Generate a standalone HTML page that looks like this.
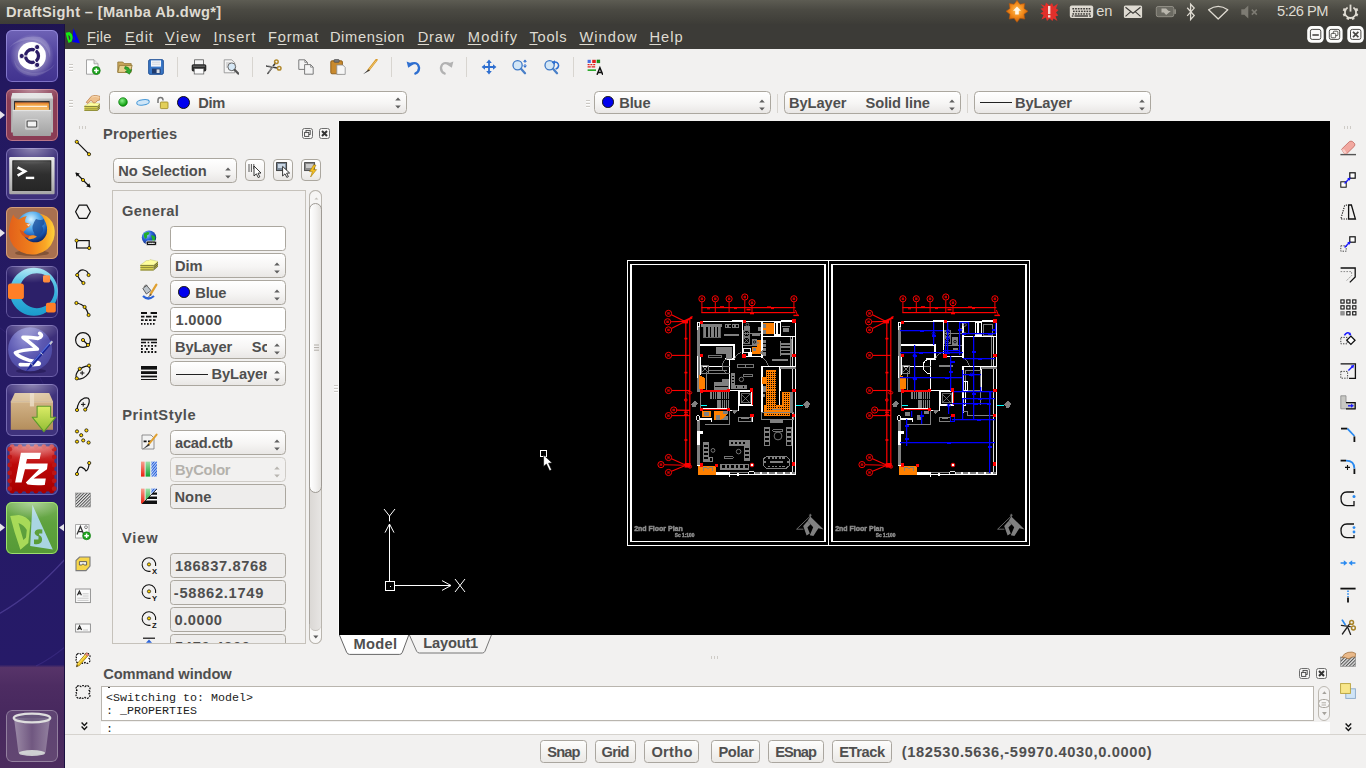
<!DOCTYPE html>
<html>
<head>
<meta charset="utf-8">
<title>DraftSight</title>
<style>
*{box-sizing:border-box;margin:0;padding:0}
html,body{width:1366px;height:768px;overflow:hidden;background:#f2f1f0;font-family:"Liberation Sans",sans-serif;}
.abs{position:absolute}
svg{display:block}
#root{position:absolute;left:0;top:0;width:1366px;height:768px;overflow:hidden;background:#f2f1f0}
#panel{position:absolute;left:0;top:0;width:1366px;height:24px;background:linear-gradient(#5d5c53 0%,#4b4a43 40%,#3d3c37 100%);}
#menubar{position:absolute;left:65px;top:24px;width:1301px;height:25px;background:#3c3b37}
#menubar u{text-decoration:underline;text-underline-offset:1.5px;text-decoration-thickness:1px}
#launcher{position:absolute;left:0;top:24px;width:65px;height:744px;background:linear-gradient(#1e1452 0%,#231860 8%,#251a63 40%,#261a68 86.1%,#573469 86.5%,#4d2c62 89%,#47285e 93%,#4c2c5e 100%);overflow:hidden;border-right:1px solid #1a1040}
.tile{position:absolute;left:6px;width:52px;height:52px;border-radius:6px;overflow:hidden}
.t{position:absolute;white-space:nowrap}
.combo{position:absolute;border:1px solid #aba79f;border-radius:4.5px;background:linear-gradient(#ffffff 0%,#f6f5f4 55%,#e9e7e5 100%);height:23px}
.field{position:absolute;border:1px solid #aba79f;border-radius:3.5px;background:#fff;height:24px}
.field.ro{background:#eeedec}
.sep{position:absolute;width:1px;background:#d8d5d0;top:57px;height:20px}
.hdl{position:absolute;width:4px;height:8px;background:repeating-linear-gradient(#cbc8c3 0 1px,#fdfdfd 1px 2px,transparent 2px 3px)}
#canvas{position:absolute;left:339px;top:121px;width:991px;height:514px;background:#000;overflow:hidden}
.btn{position:absolute;border:1px solid #aaa69f;border-radius:3.5px;background:linear-gradient(#fdfdfc,#ebe9e6);height:23px;top:740px}
</style>
</head>
<body>
<div id="root">
<div id="panel"><div class="t" style="left:5.90px;top:2.00px;font-size:14.67px;line-height:20px;color:#dfdbd2;font-weight:bold;letter-spacing:0.365px;">DraftSight – [Manba Ab.dwg*]</div><div class="t" style="left:1096.20px;top:1.00px;font-size:14.67px;line-height:20px;color:#dfdbd2;letter-spacing:-0.118px;">en</div><div class="t" style="left:1277.00px;top:1.00px;font-size:14.67px;line-height:20px;color:#dfdbd2;letter-spacing:-0.522px;">5:26 PM</div><svg class="abs" style="left:0px;top:0px;" width="1366" height="24" viewBox="0 0 1366 24"><defs><radialGradient id="og" cx="50%" cy="45%" r="55%"><stop offset="0" stop-color="#ffc35a"/><stop offset="0.55" stop-color="#f38a1a"/><stop offset="1" stop-color="#c9620a"/></radialGradient></defs><polygon points="1017.00,0.30 1019.91,4.28 1024.78,3.52 1024.02,8.39 1028.00,11.30 1024.02,14.21 1024.78,19.08 1019.91,18.32 1017.00,22.30 1014.09,18.32 1009.22,19.08 1009.98,14.21 1006.00,11.30 1009.98,8.39 1009.22,3.52 1014.09,4.28" fill="url(#og)" stroke="#b6560a" stroke-width="0.6"/><path d="M1017 6.5 l4 4.2 h-2.2 v3.8 h-3.6 v-3.8 h-2.2z" fill="#fff6e6"/><polygon points="1040.5,4 1045,6 1046,2.5 1049.5,5.5 1052,3 1053.5,6.5 1058,3.5 1056,8.5 1058.5,10 1056,12.5 1058.3,15.5 1055.5,16.5 1057.5,21 1053.5,18.5 1052.5,21 1049.5,18.5 1047,21 1045.8,17.5 1041.5,19.5 1043.5,15 1040.3,13.5 1043.3,11.5 1040.5,8.5 1043.8,8z" fill="#e2302b"/><rect x="1048" y="6" width="2.4" height="8" fill="#f7d9d4"/><rect x="1048" y="15.2" width="2.4" height="2.3" fill="#f7d9d4"/><rect x="1069.8" y="5.5" width="23.4" height="12.5" rx="2" fill="#dfdbd2"/><rect x="1072.4" y="8.0" width="1.7" height="1.5" fill="#3c3b37"/><rect x="1075.1" y="8.0" width="1.7" height="1.5" fill="#3c3b37"/><rect x="1077.8" y="8.0" width="1.7" height="1.5" fill="#3c3b37"/><rect x="1080.5" y="8.0" width="1.7" height="1.5" fill="#3c3b37"/><rect x="1083.2" y="8.0" width="1.7" height="1.5" fill="#3c3b37"/><rect x="1085.9" y="8.0" width="1.7" height="1.5" fill="#3c3b37"/><rect x="1088.6" y="8.0" width="1.7" height="1.5" fill="#3c3b37"/><rect x="1073.0" y="10.6" width="1.7" height="1.5" fill="#3c3b37"/><rect x="1075.7" y="10.6" width="1.7" height="1.5" fill="#3c3b37"/><rect x="1078.4" y="10.6" width="1.7" height="1.5" fill="#3c3b37"/><rect x="1081.1" y="10.6" width="1.7" height="1.5" fill="#3c3b37"/><rect x="1083.8" y="10.6" width="1.7" height="1.5" fill="#3c3b37"/><rect x="1086.5" y="10.6" width="1.7" height="1.5" fill="#3c3b37"/><rect x="1089.2" y="10.6" width="1.7" height="1.5" fill="#3c3b37"/><rect x="1072.4" y="13.2" width="1.7" height="1.5" fill="#3c3b37"/><rect x="1075.1" y="13.2" width="1.7" height="1.5" fill="#3c3b37"/><rect x="1077.8" y="13.2" width="1.7" height="1.5" fill="#3c3b37"/><rect x="1080.5" y="13.2" width="1.7" height="1.5" fill="#3c3b37"/><rect x="1083.2" y="13.2" width="1.7" height="1.5" fill="#3c3b37"/><rect x="1085.9" y="13.2" width="1.7" height="1.5" fill="#3c3b37"/><rect x="1088.6" y="13.2" width="1.7" height="1.5" fill="#3c3b37"/><rect x="1074.5" y="15.3" width="13.5" height="1.4" fill="#3c3b37"/><rect x="1071.8" y="15.3" width="1.6" height="1.4" fill="#3c3b37"/><rect x="1089.2" y="15.3" width="1.8" height="1.4" fill="#3c3b37"/><rect x="1123.9" y="5.5" width="18.2" height="12.5" rx="1.5" fill="#dfdbd2"/><path d="M1125.5 7.3 L1133 13.3 L1140.5 7.3 M1125.5 16.3 L1130.8 11.6 M1140.5 16.3 L1135.2 11.6" stroke="#3c3b37" stroke-width="1.1" fill="none"/><rect x="1156.3" y="6.5" width="17.5" height="10.2" rx="1.8" fill="#6b6a62" stroke="#8f8d84" stroke-width="1"/><rect x="1174.2" y="9.3" width="1.8" height="4.6" fill="#8f8d84"/><path d="M1161.5 8.6 h4.6 l2.6 2.4 h2.2 l-4.8 4.1 -2.2 -2.6 h-2.4z" fill="#b9b6ad"/><path d="M1187.2 7.8 L1194.2 15.6 L1190.6 19.5 V4.2 L1194.2 8.1 L1187.2 15.9" stroke="#dfdbd2" stroke-width="1.3" fill="none" stroke-linejoin="miter"/><path d="M1208.6 9.8 Q1218.2 2.8 1227.8 9.8 L1218.2 19 Z" stroke="#dfdbd2" stroke-width="1.3" fill="none" stroke-linejoin="round"/><path d="M1241.3 9.3 h3 l4 -3.8 v13 l-4 -3.8 h-3z" fill="#7d7b73"/><path d="M1251.8 9.6 l5 5 M1256.8 9.6 l-5 5" stroke="#7d7b73" stroke-width="1.5"/><line x1="1355.30" y1="10.31" x2="1357.80" y2="9.28" stroke="#dfdbd2" stroke-width="2.6"/><line x1="1355.30" y1="14.29" x2="1357.80" y2="15.32" stroke="#dfdbd2" stroke-width="2.6"/><line x1="1352.49" y1="17.10" x2="1353.52" y2="19.60" stroke="#dfdbd2" stroke-width="2.6"/><line x1="1348.51" y1="17.10" x2="1347.48" y2="19.60" stroke="#dfdbd2" stroke-width="2.6"/><line x1="1345.70" y1="14.29" x2="1343.20" y2="15.32" stroke="#dfdbd2" stroke-width="2.6"/><line x1="1345.70" y1="10.31" x2="1343.20" y2="9.28" stroke="#dfdbd2" stroke-width="2.6"/><path d="M1347.6 7.6 A5.6 5.6 0 1 0 1353.4 7.6" stroke="#dfdbd2" stroke-width="1.8" fill="none"/><line x1="1350.5" y1="4.6" x2="1350.5" y2="11.6" stroke="#dfdbd2" stroke-width="1.8"/></svg></div>
<div id="menubar"><div class="t" style="left:21.90px;top:3.00px;font-size:14.67px;line-height:20px;color:#dfdbd2;letter-spacing:0.287px;"><u>F</u>ile</div><div class="t" style="left:59.90px;top:3.00px;font-size:14.67px;line-height:20px;color:#dfdbd2;letter-spacing:0.907px;"><u>E</u>dit</div><div class="t" style="left:100.10px;top:3.00px;font-size:14.67px;line-height:20px;color:#dfdbd2;letter-spacing:1.256px;"><u>V</u>iew</div><div class="t" style="left:148.40px;top:3.00px;font-size:14.67px;line-height:20px;color:#dfdbd2;letter-spacing:1.062px;"><u>I</u>nsert</div><div class="t" style="left:202.90px;top:3.00px;font-size:14.67px;line-height:20px;color:#dfdbd2;letter-spacing:0.808px;">F<u>o</u>rmat</div><div class="t" style="left:264.90px;top:3.00px;font-size:14.67px;line-height:20px;color:#dfdbd2;letter-spacing:0.650px;">Dimen<u>s</u>ion</div><div class="t" style="left:352.70px;top:3.00px;font-size:14.67px;line-height:20px;color:#dfdbd2;letter-spacing:0.822px;"><u>D</u>raw</div><div class="t" style="left:402.70px;top:3.00px;font-size:14.67px;line-height:20px;color:#dfdbd2;letter-spacing:1.238px;"><u>M</u>odify</div><div class="t" style="left:464.40px;top:3.00px;font-size:14.67px;line-height:20px;color:#dfdbd2;letter-spacing:0.763px;"><u>T</u>ools</div><div class="t" style="left:514.40px;top:3.00px;font-size:14.67px;line-height:20px;color:#dfdbd2;letter-spacing:1.025px;"><u>W</u>indow</div><div class="t" style="left:584.40px;top:3.00px;font-size:14.67px;line-height:20px;color:#dfdbd2;letter-spacing:1.043px;"><u>H</u>elp</div><svg class="abs" style="left:0px;top:0px;" width="17" height="25" viewBox="0 0 17 25"><path d="M8.4 4.2 L15 19.3 L7.3 18z M9.2 12.6 q-1.2 0.4 -0.6 1.4 q1 0.6 0.4 1.6 q-0.6 0.6 -1.2 0.2 l0 0.6 q1.4 0.6 2 -0.6 q0.4 -1.2 -0.6 -1.8 q-0.2 -0.6 0.4 -0.8z" fill="#0000f2" fill-rule="evenodd"/><path d="M0.7 8.7 L4.4 7.9 Q8 9.8 7.6 14.6 L6.6 17.6 L3.6 18.9 Q1.4 13.4 0.7 8.7z M3.3 10.8 Q3.4 13.6 4.5 16.2 L5.4 15 Q5.8 12.2 3.3 10.8z" fill="#12ee12" fill-rule="evenodd"/></svg><svg class="abs" style="left:0px;top:0px;" width="1301" height="25" viewBox="0 0 1301 25"><rect x="1242.2" y="2.1" width="16.5" height="16.7" rx="4.6" fill="#fdfdfc"/><rect x="1245.4" y="5.4" width="10.4" height="10" rx="1.8" fill="#fbfaf9" stroke="#4a4946" stroke-width="1"/><rect x="1247.4" y="10.2" width="6.4" height="1.6" fill="#4a4946"/><rect x="1261.1" y="2.1" width="16.5" height="16.7" rx="4.6" fill="#fdfdfc"/><rect x="1264.3" y="5.4" width="10.4" height="10" rx="1.8" fill="#fbfaf9" stroke="#4a4946" stroke-width="1"/><rect x="1268.3" y="7.2" width="4.6" height="4.4" rx="0.9" fill="none" stroke="#4a4946" stroke-width="0.9"/><rect x="1266.1" y="9.4" width="4.6" height="4.4" rx="0.9" fill="#fbfaf9" stroke="#4a4946" stroke-width="0.9"/><rect x="1282.3" y="2.1" width="16.5" height="16.7" rx="4.6" fill="#fdfdfc"/><rect x="1285.5" y="5.4" width="10.4" height="10" rx="1.8" fill="#fbfaf9" stroke="#4a4946" stroke-width="1"/><path d="M1288.0 7.8 l5.4 5.4 M1293.4 7.8 l-5.4 5.4" stroke="#4a4946" stroke-width="1.7"/></svg></div>
<div id="launcher"><svg class="abs" style="left:0px;top:0px;" width="65" height="744" viewBox="0 0 65 744"><defs><radialGradient id="tg" cx="50%" cy="50%" r="50%"><stop offset="0" stop-color="#fff" stop-opacity="0.42"/><stop offset="1" stop-color="#fff" stop-opacity="0"/></radialGradient></defs><path d="M-5 592 Q32 572 66 534" stroke="rgba(120,100,200,0.4)" stroke-width="1.3" fill="none"/><path d="M36 642 Q52 634 66 622" stroke="rgba(90,70,170,0.3)" stroke-width="1.2" fill="none"/><path d="M-5 300 Q40 330 66 420" stroke="rgba(70,50,140,0.3)" stroke-width="1" fill="none"/></svg><div class="tile" style="top:6px;background:#4a3c9a;"><svg width="52" height="52" viewBox="0 0 52 52" style="position:absolute;left:0;top:0"><defs><linearGradient id="d1" x1="0" y1="0" x2="0" y2="1"><stop offset="0" stop-color="#6f63b6"/><stop offset="0.5" stop-color="#4f419c"/><stop offset="1" stop-color="#41338f"/></linearGradient><radialGradient id="d2" cx="50%" cy="50%" r="50%"><stop offset="0.55" stop-color="#fff" stop-opacity="0.38"/><stop offset="1" stop-color="#fff" stop-opacity="0"/></radialGradient></defs><rect width="52" height="52" fill="url(#d1)"/><path d="M3 18 Q14 4 34 7 Q46 12 44 28 Q40 8 20 10 Q9 12 3 18z" fill="rgba(255,255,255,0.16)"/><path d="M8 30 Q10 46 30 46 Q45 42 49 34 Q40 44 26 43 Q12 41 8 30z" fill="rgba(255,255,255,0.13)"/><circle cx="26" cy="26" r="22" fill="url(#d2)"/><circle cx="25.9" cy="25.9" r="14" fill="#ffffff"/><circle cx="26" cy="26" r="6.5" fill="none" stroke="#2b1c66" stroke-width="3.3"/><line x1="28.00" y1="22.54" x2="30.50" y2="18.21" stroke="#fff" stroke-width="1.2"/><circle cx="31.15" cy="17.08" r="2.6" fill="#2b1c66" stroke="#fff" stroke-width="0.9"/><line x1="22.00" y1="26.00" x2="17.00" y2="26.00" stroke="#fff" stroke-width="1.2"/><circle cx="15.70" cy="26.00" r="2.6" fill="#2b1c66" stroke="#fff" stroke-width="0.9"/><line x1="28.00" y1="29.46" x2="30.50" y2="33.79" stroke="#fff" stroke-width="1.2"/><circle cx="31.15" cy="34.92" r="2.6" fill="#2b1c66" stroke="#fff" stroke-width="0.9"/><rect x="0.5" y="0.5" width="51" height="51" rx="5.5" fill="none" stroke="rgba(190,180,255,0.5)" stroke-width="1"/></svg></div><div class="tile" style="top:65px;background:#8a3c54;"><svg width="52" height="52" viewBox="0 0 52 52" style="position:absolute;left:0;top:0"><defs><linearGradient id="f1" x1="0" y1="0" x2="0" y2="1"><stop offset="0" stop-color="#cdcdcd"/><stop offset="1" stop-color="#a2a2a2"/></linearGradient></defs><rect width="52" height="52" fill="#8a3c54"/><path d="M6.4 4 H45.6 L47 9.2 V43.6 H5.1 V9.2z" fill="#b4b4b4"/><path d="M6.4 4 H45.6 L47 9.4 H5.1z" fill="#dedede"/><rect x="8.1" y="11.9" width="35.5" height="9" fill="#262626"/><rect x="9" y="13.4" width="33.8" height="7.4" fill="#e2762a"/><rect x="9" y="14.6" width="33.8" height="6.2" fill="#f0a040"/><rect x="10.6" y="16.7" width="30.6" height="1.5" fill="#fdf0dc"/><rect x="9" y="18.6" width="33.8" height="2.2" fill="#f4b860"/><rect x="6.8" y="20.9" width="38.3" height="26" rx="0.8" fill="url(#f1)"/><rect x="6.8" y="20.9" width="38.3" height="1.2" fill="#e4e4e4"/><rect x="19" y="30" width="13.6" height="10.8" rx="1.6" fill="#d2d2d2"/><rect x="21.1" y="32" width="9.6" height="6" rx="0.8" fill="#f2f2f2" stroke="#4c4c4c" stroke-width="1.1"/><ellipse cx="26" cy="0" rx="30" ry="17" fill="url(#tg)"/><rect x="0.5" y="0.5" width="51" height="51" rx="5.5" fill="none" stroke="rgba(255,200,215,0.42)" stroke-width="1"/></svg></div><div class="tile" style="top:124px;background:#3e317b;"><svg width="52" height="52" viewBox="0 0 52 52" style="position:absolute;left:0;top:0"><defs><linearGradient id="t3" x1="0" y1="0" x2="0" y2="1"><stop offset="0" stop-color="#ececec"/><stop offset="1" stop-color="#a6a6a6"/></linearGradient><linearGradient id="t4" x1="0" y1="0" x2="0" y2="1"><stop offset="0" stop-color="#4e4e4e"/><stop offset="0.45" stop-color="#2f2f2f"/><stop offset="1" stop-color="#262626"/></linearGradient></defs><rect width="52" height="52" fill="#3e317b"/><rect x="3.2" y="9.1" width="45.4" height="37.1" rx="1.2" fill="url(#t3)"/><rect x="6.8" y="12.8" width="38.1" height="29.8" fill="url(#t4)" stroke="#111" stroke-width="0.8"/><path d="M11.6 19.4 L19 23.4 L11.6 27.6" stroke="#fff" stroke-width="2.7" fill="none"/><rect x="19.8" y="28.7" width="8.4" height="2.4" fill="#fff"/><ellipse cx="26" cy="0" rx="30" ry="17" fill="url(#tg)"/><rect x="0.5" y="0.5" width="51" height="51" rx="5.5" fill="none" stroke="rgba(200,190,255,0.4)" stroke-width="1"/></svg></div><div class="tile" style="top:183px;background:#a9704f;"><svg width="52" height="52" viewBox="0 0 52 52" style="position:absolute;left:0;top:0"><defs><radialGradient id="g4" cx="45%" cy="25%" r="75%"><stop offset="0" stop-color="#d6f2ff"/><stop offset="0.35" stop-color="#5ab0ee"/><stop offset="0.7" stop-color="#1c5fb8"/><stop offset="1" stop-color="#0a1f5e"/></radialGradient><linearGradient id="fx" x1="0" y1="0" x2="1" y2="0"><stop offset="0" stop-color="#e2601a"/><stop offset="0.5" stop-color="#f0801c"/><stop offset="0.8" stop-color="#f9a826"/><stop offset="1" stop-color="#ffd23c"/></linearGradient></defs><rect width="52" height="52" fill="#a9704f"/><ellipse cx="26" cy="46" rx="17" ry="3" fill="rgba(60,30,10,0.35)"/><circle cx="26.6" cy="20.4" r="16" fill="url(#g4)"/><path d="M30 12 q5 2 8 0 q2 5 -2 7 q3 4 -1 8 q-3 5 -8 6 q3 -6 0 -9 q-2 -5 3 -12z" fill="#174a98" opacity="0.75"/><path d="M7.2 7.6 Q9 11.6 12.6 12.4 Q16.4 10 20.8 9 Q18.4 12.8 19.4 15.4 Q22 16 24.6 17.4 Q24 19.8 20.8 21 Q19.6 23.6 17.6 24.4 Q17 28.4 20 31.4 Q24.6 35.8 31.6 35.2 Q38 34 40.6 27 Q42.4 19.6 38 12 Q36.6 8.6 33.2 6.4 Q42 8 46.4 15.4 Q50.4 23.4 47.6 32.6 Q43.6 44.6 30.6 47.2 Q16 49 7.4 39 Q0.8 30 3.6 18.6 Q4.8 12.6 7.2 7.6z" fill="url(#fx)"/><path d="M13.6 22.6 Q14.4 28.8 21 30.8 Q26.4 31.6 30.6 29 Q27 28 25 28.6 Q19.6 28.4 17.2 24.4z" fill="#d8541a"/><path d="M23 29.4 Q28 27 31 29.8 Q27 32.8 22 32z" fill="#f2902a"/><path d="M20.4 17.6 l4 -0.6 l-1.6 2.6z" fill="#fbe9d2"/><rect x="0.5" y="0.5" width="51" height="51" rx="5.5" fill="none" stroke="rgba(255,205,170,0.5)" stroke-width="1"/></svg></div><div class="tile" style="top:242px;background:#2c2069;"><svg width="52" height="52" viewBox="0 0 52 52" style="position:absolute;left:0;top:0"><defs><linearGradient id="c5" x1="0" y1="0" x2="0" y2="1"><stop offset="0" stop-color="#8adcf0"/><stop offset="0.5" stop-color="#3ab4de"/><stop offset="1" stop-color="#1a9acc"/></linearGradient></defs><rect width="52" height="52" fill="#2c2069"/><path d="M27.9 1.8 a24 24 0 1 0 0.01 0z M30.9 7.2 a17.5 17.5 0 1 1 -0.01 0z" fill="url(#c5)" fill-rule="evenodd"/><rect x="2" y="17.4" width="15.9" height="15.6" rx="2.6" fill="#ff7f27"/><rect x="37" y="9.2" width="7.1" height="7.2" rx="1.4" fill="#ff8a3a"/><rect x="40" y="36.8" width="9.8" height="9.8" rx="1.8" fill="#ff7f27"/><ellipse cx="26" cy="0" rx="30" ry="17" fill="url(#tg)"/><rect x="0.5" y="0.5" width="51" height="51" rx="5.5" fill="none" stroke="rgba(200,190,255,0.35)" stroke-width="1"/></svg></div><div class="tile" style="top:301px;background:#3c2f7a;"><svg width="52" height="52" viewBox="0 0 52 52" style="position:absolute;left:0;top:0"><defs><radialGradient id="e6" cx="38%" cy="28%" r="80%"><stop offset="0" stop-color="#8f8dd2"/><stop offset="0.5" stop-color="#5c59b2"/><stop offset="1" stop-color="#4a46a0"/></radialGradient></defs><rect width="52" height="52" fill="#3c2f7a"/><ellipse cx="25" cy="46" rx="15" ry="2.6" fill="rgba(20,10,60,0.4)"/><circle cx="24.1" cy="24.3" r="22" fill="url(#e6)"/><path d="M33.6 8.4 Q38 11 32 13.4 Q22 12 17 12.4 Q21 15 31.4 24 Q14 25 9.4 27.8 Q12 32 24 35.6 Q35 37.6 33 39.2 Q22 40 14.2 39.6" stroke="#fff" stroke-width="3.6" fill="none" stroke-linejoin="round" stroke-linecap="round"/><path d="M45.8 15.4 L47 17 L27.4 40.6 L20 46.4 L24.6 38.4z" fill="#1a2496"/><path d="M45.4 16.2 L25.4 39" stroke="#5a74e0" stroke-width="1.1"/><path d="M45.8 15.4 l1.2 1.6 l-2.4 3 l-1.4 -1.4z" fill="#c8c8d0"/><path d="M34.4 27.6 l2.4 2 M25 38.6 l2.2 2" stroke="#c8c8d0" stroke-width="1"/><ellipse cx="26" cy="0" rx="30" ry="17" fill="url(#tg)"/><rect x="0.5" y="0.5" width="51" height="51" rx="5.5" fill="none" stroke="rgba(200,190,255,0.35)" stroke-width="1"/></svg></div><div class="tile" style="top:360px;background:#3f327c;"><svg width="52" height="52" viewBox="0 0 52 52" style="position:absolute;left:0;top:0"><defs><linearGradient id="p7" x1="0" y1="0" x2="0" y2="1"><stop offset="0" stop-color="#d2b388"/><stop offset="1" stop-color="#b48e5c"/></linearGradient><linearGradient id="a7" x1="0" y1="0" x2="0" y2="1"><stop offset="0" stop-color="#dbec66"/><stop offset="1" stop-color="#93bd34"/></linearGradient></defs><rect width="52" height="52" fill="#3f327c"/><path d="M8.8 9.1 H43.2 L47 17.4 H4.8z" fill="#dcc39e"/><rect x="4.8" y="17.4" width="42.2" height="28.4" fill="url(#p7)"/><rect x="4.8" y="17.4" width="42.2" height="1" fill="#e6d2b0"/><rect x="23.9" y="9.1" width="4.2" height="13.3" fill="#eadcc4" opacity="0.85"/><path d="M31.1 22.2 H44.6 V33.2 H49.8 L37.9 47.7 L26.2 33.2 H31.1z" fill="url(#a7)" stroke="#5d9a2c" stroke-width="1.1" stroke-linejoin="round"/><ellipse cx="26" cy="0" rx="30" ry="17" fill="url(#tg)"/><rect x="0.5" y="0.5" width="51" height="51" rx="5.5" fill="none" stroke="rgba(200,190,255,0.4)" stroke-width="1"/></svg></div><div class="tile" style="top:419px;background:#3b3688;"><svg width="52" height="52" viewBox="0 0 52 52" style="position:absolute;left:0;top:0"><defs><linearGradient id="z8" x1="0" y1="0" x2="0" y2="1"><stop offset="0" stop-color="#dc5a5a"/><stop offset="0.4" stop-color="#be0808"/><stop offset="1" stop-color="#a80000"/></linearGradient></defs><rect width="52" height="52" fill="#3b3688"/><rect x="3.6" y="3.4" width="44.8" height="45" fill="url(#z8)"/><circle cx="6.2" cy="3.6" r="2.4" fill="#d04848"/><circle cx="6.2" cy="48.2" r="2.4" fill="#a80000"/><circle cx="3.8" cy="6.2" r="2.4" fill="#bc1616"/><circle cx="48.2" cy="6.2" r="2.4" fill="#bc1616"/><circle cx="14.1" cy="3.6" r="2.4" fill="#d04848"/><circle cx="14.1" cy="48.2" r="2.4" fill="#a80000"/><circle cx="3.8" cy="14.1" r="2.4" fill="#bc1616"/><circle cx="48.2" cy="14.1" r="2.4" fill="#bc1616"/><circle cx="22.0" cy="3.6" r="2.4" fill="#d04848"/><circle cx="22.0" cy="48.2" r="2.4" fill="#a80000"/><circle cx="3.8" cy="22.0" r="2.4" fill="#bc1616"/><circle cx="48.2" cy="22.0" r="2.4" fill="#bc1616"/><circle cx="29.9" cy="3.6" r="2.4" fill="#d04848"/><circle cx="29.9" cy="48.2" r="2.4" fill="#a80000"/><circle cx="3.8" cy="29.9" r="2.4" fill="#bc1616"/><circle cx="48.2" cy="29.9" r="2.4" fill="#bc1616"/><circle cx="37.8" cy="3.6" r="2.4" fill="#d04848"/><circle cx="37.8" cy="48.2" r="2.4" fill="#a80000"/><circle cx="3.8" cy="37.8" r="2.4" fill="#bc1616"/><circle cx="48.2" cy="37.8" r="2.4" fill="#bc1616"/><circle cx="45.7" cy="3.6" r="2.4" fill="#d04848"/><circle cx="45.7" cy="48.2" r="2.4" fill="#a80000"/><circle cx="3.8" cy="45.7" r="2.4" fill="#bc1616"/><circle cx="48.2" cy="45.7" r="2.4" fill="#bc1616"/><path d="M14.9 9.8 H34.9 L33.7 16 H21 L20 20.5 H41.7 L41 26.2 L27.6 35.6 H39.8 L38.8 42 Q28 42.6 21.6 41.4 L19.8 39.4 L33 26.2 H19 L15.6 39.6 H9.1z" fill="#fff"/><ellipse cx="26" cy="0" rx="30" ry="17" fill="url(#tg)"/><rect x="0.5" y="0.5" width="51" height="51" rx="5.5" fill="none" stroke="rgba(200,190,255,0.35)" stroke-width="1"/></svg></div><div class="tile" style="top:478px;background:#5aa030;"><svg width="52" height="52" viewBox="0 0 52 52" style="position:absolute;left:0;top:0"><defs><linearGradient id="g9" x1="0" y1="0" x2="0" y2="1"><stop offset="0" stop-color="#78b258"/><stop offset="0.4" stop-color="#5fa23e"/><stop offset="1" stop-color="#569a36"/></linearGradient></defs><rect width="52" height="52" fill="url(#g9)"/><path d="M4.2 14.1 L12.8 13 Q21 14.4 24.5 20.5 L22.3 40.9 L14.4 47.7 Q8 30 4.2 14.1z M12.5 20.9 Q15 30 17.4 37.9 L20 35.6 L20.8 28.1 Q18 23 12.5 20.9z" fill="#a8da58" fill-rule="evenodd"/><path d="M26.4 2.8 L46.8 47.4 L24.2 44z M36.3 27.6 Q30 26 28.6 30.4 Q28.6 33 32.6 34.4 L32.4 37.4 L28 37.6 L28 42 Q35 43 36 38.4 Q36.6 34.6 33 33 L33.2 31.4 L36.3 31.4z" fill="#a9d5e2" fill-rule="evenodd"/><ellipse cx="26" cy="0" rx="30" ry="17" fill="url(#tg)"/><rect x="0.5" y="0.5" width="51" height="51" rx="5.5" fill="none" stroke="rgba(170,235,120,0.85)" stroke-width="1"/></svg></div><div class="tile" style="top:686px;background:rgba(255,255,255,0.13);"><svg width="52" height="52" viewBox="0 0 52 52" style="position:absolute;left:0;top:0"><defs><linearGradient id="t1" x1="0" y1="0" x2="1" y2="0"><stop offset="0" stop-color="rgba(255,255,255,0.38)"/><stop offset="0.5" stop-color="rgba(255,255,255,0.10)"/><stop offset="1" stop-color="rgba(255,255,255,0.32)"/></linearGradient></defs><path d="M8 8 L12.4 42.4 Q26 47 39.6 42.4 L44 8z" fill="url(#t1)"/><ellipse cx="26" cy="43" rx="13.2" ry="3" fill="rgba(232,240,232,0.78)"/><ellipse cx="26" cy="8" rx="18.2" ry="4.4" fill="rgba(110,100,130,0.6)" stroke="#dedede" stroke-width="2.4"/><rect x="0.5" y="0.5" width="51" height="51" rx="5.5" fill="none" stroke="rgba(255,255,255,0.32)" stroke-width="1"/></svg></div><svg class="abs" style="left:0px;top:0px;" width="65" height="744" viewBox="0 0 65 744"><path d="M0 87.0 l5 4 l-5 4z" fill="#e6e4ea"/><path d="M0 205.0 l5 4 l-5 4z" fill="#e6e4ea"/><path d="M0 499.6 l5 4 l-5 4z" fill="#e6e4ea"/><path d="M64.6 499.6 l-5.6 4 l5.6 4z" fill="#e6e4ea"/></svg></div>
<div class="hdl" style="left:69px;top:64px"></div><div class="hdl" style="left:69px;top:100px"></div><div class="hdl" style="left:586px;top:100px"></div><div class="sep" style="left:177px"></div><div class="sep" style="left:252px"></div><div class="sep" style="left:391px"></div><div class="sep" style="left:466px"></div><div class="sep" style="left:573px"></div><svg class="abs" style="left:85px;top:59px;" width="16" height="16" viewBox="0 0 16 16"><path d="M1.5 0.8 h7.5 l4 4 v10.4 h-11.5z" fill="#fdfdfd" stroke="#9a9a9a" stroke-width="0.9"/><path d="M9 0.8 v4 h4" fill="#e4e4e4" stroke="#9a9a9a" stroke-width="0.8"/><circle cx="11.3" cy="11.6" r="4" fill="#1fa31f" stroke="#117a11" stroke-width="0.6"/><path d="M9 11.6 h4.6 M11.3 9.3 v4.6" stroke="#fff" stroke-width="1.5"/></svg><svg class="abs" style="left:116.5px;top:59px;" width="16" height="16" viewBox="0 0 16 16"><path d="M0.8 3 h5 l1.4 1.6 h7 v8.6 h-13.4z" fill="#c9a85c" stroke="#8f7432" stroke-width="0.8"/><path d="M2.4 6.4 h12.8 l-2 7 h-12.4z" fill="#e6cf8e" stroke="#8f7432" stroke-width="0.8"/><path d="M8 7.6 q4.2 0 4.8 3.6 l1.9 -0.6 l-2.2 4.6 l-4.2 -2.6 l1.9 -0.5 q-0.6 -2 -2.6 -2.3z" fill="#2faa2f" stroke="#157815" stroke-width="0.6"/></svg><svg class="abs" style="left:148px;top:59px;" width="16" height="16" viewBox="0 0 16 16"><rect x="0.7" y="0.7" width="14.6" height="14.6" rx="1.2" fill="#3a78c8" stroke="#1f4f96" stroke-width="1"/><rect x="3" y="1.4" width="10" height="6.2" fill="#f4f6fa"/><path d="M4 3.2 h8 M4 5.2 h8" stroke="#c9ced8" stroke-width="0.8"/><rect x="4" y="9.6" width="8.6" height="5" fill="#203b6e"/><rect x="8.6" y="10.4" width="3" height="3.6" fill="#d8dde6"/></svg><svg class="abs" style="left:191px;top:59px;" width="16" height="16" viewBox="0 0 16 16"><rect x="3.6" y="0.8" width="8.8" height="5.5" fill="#f4f4f4" stroke="#555" stroke-width="0.8"/><rect x="0.7" y="5.2" width="14.6" height="7.2" rx="1.6" fill="#2a2a2a"/><rect x="3.2" y="9.6" width="9.6" height="5.4" fill="#fafafa" stroke="#555" stroke-width="0.7"/><rect x="2" y="6.6" width="12" height="1.2" fill="#666"/></svg><svg class="abs" style="left:222.5px;top:59px;" width="16" height="16" viewBox="0 0 16 16"><path d="M1.2 0.8 h7.5 l3 3 v10 h-10.5z" fill="#f4f4f4" stroke="#8a8a8a" stroke-width="0.8"/><path d="M3 4 h5 M3 6 h3 M3 8 h3" stroke="#aaa" stroke-width="0.8"/><circle cx="8.8" cy="7.8" r="3.9" fill="#cfe4f4" fill-opacity="0.85" stroke="#6a6a6a" stroke-width="1"/><path d="M11.6 10.8 l3.6 3.8" stroke="#555" stroke-width="2.2" stroke-linecap="round"/></svg><svg class="abs" style="left:266px;top:59px;" width="16" height="16" viewBox="0 0 16 16"><path d="M0.4 6.9 L11.4 8.9 M1.9 14.4 L9.2 4.2" stroke="#3a3a3a" stroke-width="1.5" stroke-linecap="round"/><path d="M0.8 6.5 L8 7.8 M2.4 13.4 L7 7.4" stroke="#d8d8d8" stroke-width="0.6"/><circle cx="10.4" cy="2.7" r="1.8" fill="none" stroke="#b28a2e" stroke-width="1.5"/><circle cx="13.2" cy="9.3" r="1.8" fill="none" stroke="#b28a2e" stroke-width="1.5"/></svg><svg class="abs" style="left:297.5px;top:59px;" width="16" height="16" viewBox="0 0 16 16"><path d="M0.8 0.8 h6 l2.6 2.6 v7 h-8.6z" fill="#f4f4f4" stroke="#6e6e6e" stroke-width="0.9"/><path d="M6.6 5.6 h6 l2.6 2.6 v7 h-8.6z" fill="#f4f4f4" stroke="#6e6e6e" stroke-width="0.9"/><path d="M6.8 0.8 v2.6 h2.6 M12.6 5.6 v2.6 h2.6" stroke="#6e6e6e" stroke-width="0.7" fill="none"/></svg><svg class="abs" style="left:330px;top:59px;" width="16" height="16" viewBox="0 0 16 16"><rect x="0.8" y="1.8" width="11.6" height="13" rx="1.2" fill="#c98a2e" stroke="#8a5a14" stroke-width="0.9"/><rect x="4" y="0.5" width="5.2" height="2.8" rx="0.8" fill="#777" stroke="#444" stroke-width="0.6"/><path d="M6.8 6 h6 l2.4 2.4 v7 h-8.4z" fill="#f6f6f6" stroke="#8a8a8a" stroke-width="0.8"/></svg><svg class="abs" style="left:362px;top:59px;" width="16" height="16" viewBox="0 0 16 16"><path d="M14.6 0.8 L6.4 11.2" stroke="#d99a2a" stroke-width="2.2" stroke-linecap="round"/><path d="M6.8 10.2 L1 15.2 L4.2 13.6 L7.8 11.4z" fill="#333"/><path d="M14.2 1.6 L7 10.6" stroke="#f5d58a" stroke-width="0.7"/></svg><svg class="abs" style="left:405.5px;top:59px;" width="16" height="16" viewBox="0 0 16 16"><path d="M3.4 5.4 Q11.6 1.6 13 8.4 Q13.4 12.4 9.4 14.6" stroke="#2f6fd0" stroke-width="2.3" fill="none" stroke-linecap="round"/><path d="M0.6 2.4 L2.2 8.8 L7.6 5.2z" fill="#2f6fd0"/></svg><svg class="abs" style="left:437.5px;top:59px;" width="16" height="16" viewBox="0 0 16 16"><path d="M12.6 5.4 Q4.4 1.6 3 8.4 Q2.6 12.4 6.6 14.6" stroke="#b2b2b2" stroke-width="2.3" fill="none" stroke-linecap="round"/><path d="M15.4 2.4 L13.8 8.8 L8.4 5.2z" fill="#b2b2b2"/></svg><svg class="abs" style="left:480.5px;top:59px;" width="16" height="16" viewBox="0 0 16 16"><path d="M8 0.6 l2.8 3.4 h-1.9 v3.1 h3.1 v-1.9 l3.4 2.8 l-3.4 2.8 v-1.9 h-3.1 v3.1 h1.9 l-2.8 3.4 l-2.8 -3.4 h1.9 v-3.1 h-3.1 v1.9 l-3.4 -2.8 l3.4 -2.8 v1.9 h3.1 v-3.1 h-1.9z" fill="#2f6fd0"/></svg><svg class="abs" style="left:512px;top:59px;" width="16" height="16" viewBox="0 0 16 16"><circle cx="5.6" cy="6.2" r="4.6" fill="#d3e6f6" stroke="#3d78c6" stroke-width="1.3"/><path d="M9 9.8 l4 4.4" stroke="#4a80c8" stroke-width="2.3" stroke-linecap="round"/><path d="M13 0.4 l2 2.4 h-4z M13 9 l2 -2.4 h-4z M12.5 2.6 h1 v1.2 h-1z M12.5 5 h1 v1.2 h-1z" fill="#2f6fd0"/></svg><svg class="abs" style="left:544px;top:59px;" width="16" height="16" viewBox="0 0 16 16"><circle cx="5.6" cy="6.2" r="4.6" fill="#d3e6f6" stroke="#3d78c6" stroke-width="1.3"/><path d="M9 9.8 l4 4.4" stroke="#4a80c8" stroke-width="2.3" stroke-linecap="round"/><path d="M9.2 3.2 Q14.4 2.2 14.6 6.6 Q14.2 9.4 11.6 10" stroke="#2f6fd0" stroke-width="1.5" fill="none"/><path d="M7.6 3.6 l3.4 -2.4 v4.6z" fill="#2f6fd0"/></svg><svg class="abs" style="left:587px;top:59px;" width="16" height="16" viewBox="0 0 16 16"><rect x="0.6" y="0.8" width="3.2" height="3.2" fill="#4a6fe0"/><rect x="5.2" y="0.8" width="3.6" height="3.2" fill="#e02020"/><rect x="10" y="1" width="2.8" height="2.8" fill="#18a018" stroke="#0d6f0d" stroke-width="0.6"/><path d="M0.6 5.6 h2 M3.4 5.6 h2 M6.2 5.6 h2 M0.6 7.8 h3.2 M4.6 7.8 h3.6" stroke="#e02020" stroke-width="1.3"/><rect x="0.6" y="10.4" width="8.4" height="1.5" fill="#18a018"/><path d="M10 15.8 L12.9 8.8 L15.8 15.8 M11 13.6 h3.8" stroke="#111" stroke-width="1.5" fill="none"/></svg><svg class="abs" style="left:84px;top:95px;" width="16" height="16" viewBox="0 0 16 16"><path d="M0.4 11 H13.5 V16 H0.4z" fill="#d8d050"/><path d="M0.4 11 h13.1 v1 h-13.1z M0.4 13.4 h13.1 v0.9 h-13.1z M0.4 15.3 h13.1 v0.7 h-13.1z" fill="#7e7e34"/><path d="M13.5 11 L15.8 8.4 V13.4 L13.5 16z" fill="#6a6a30"/><path d="M13.5 12.6 l2.3 -2.6 M13.5 14.6 l2.3 -2.6" stroke="#c8c050" stroke-width="0.7"/><path d="M0.4 11 L6.6 7.6 L15.8 8.4 L13.5 11z" fill="#ffff9e" stroke="#b8b860" stroke-width="0.4"/><path d="M2.3 7.2 L7.4 1.2 Q11 -0.4 16 1.4 V4.8 Q13 5.2 11.4 7.6 L9.6 8 L7 5.2 L4 8.2 Q2.6 8.4 2.3 7.2z" fill="#eec08c" stroke="#b8763a" stroke-width="0.7"/><path d="M7.6 2 Q11 0.8 15.4 2.2" stroke="#f8dcb8" stroke-width="0.9" fill="none"/></svg><div class="combo" style="left:109px;top:91px;width:298px"></div><svg class="abs" style="left:117.5px;top:96.5px;" width="10" height="10" viewBox="0 0 10 10"><defs><radialGradient id="gg" cx="40%" cy="35%" r="60%"><stop offset="0" stop-color="#8cf28c"/><stop offset="1" stop-color="#0a9a0a"/></radialGradient></defs><circle cx="5" cy="5" r="4.3" fill="url(#gg)" stroke="#0a7a0a" stroke-width="0.7"/></svg><svg class="abs" style="left:135.5px;top:97.5px;" width="14" height="9" viewBox="0 0 14 9"><ellipse cx="7" cy="4.4" rx="6.3" ry="2.7" fill="#cfe6f8" stroke="#4a9ad8" stroke-width="1" transform="rotate(-8 7 4.4)"/></svg><svg class="abs" style="left:155.5px;top:95.5px;" width="13" height="14" viewBox="0 0 13 14"><path d="M2 7 v-3 q0 -2.6 2.6 -2.6 q2.4 0 2.4 2.6 v0.6" stroke="#777" stroke-width="1.5" fill="none"/><rect x="4.4" y="6" width="7.6" height="6.6" rx="0.8" fill="#e2cf5a" stroke="#9a8620" stroke-width="0.8"/></svg><div class="abs" style="left:176.5px;top:95.5px;width:13px;height:13px;border-radius:50%;background:#0000ee;border:1.2px solid #111"></div><div class="t" style="left:198.20px;top:93.00px;font-size:14.67px;line-height:20px;color:#4f4f4f;font-weight:bold;letter-spacing:-0.357px;">Dim</div><svg class="abs" style="left:393.5px;top:95.8px" width="8" height="14" viewBox="0 0 8 14"><path d="M1.2 4.6 L4 1.6 L6.8 4.6z M1.2 9.6 L4 12.6 L6.8 9.6z" fill="#606060"/></svg><div class="combo" style="left:594px;top:91px;width:177px"></div><div class="abs" style="left:602.3px;top:96.3px;width:11.6px;height:11.6px;border-radius:50%;background:#0000ee;border:1.1px solid #111"></div><div class="t" style="left:619.20px;top:93.00px;font-size:14.67px;line-height:20px;color:#4f4f4f;font-weight:bold;letter-spacing:-0.130px;">Blue</div><svg class="abs" style="left:757.8px;top:97.9px" width="8" height="14" viewBox="0 0 8 14"><path d="M1.2 4.6 L4 1.6 L6.8 4.6z M1.2 9.6 L4 12.6 L6.8 9.6z" fill="#606060"/></svg><div class="sep" style="left:777px;top:94px;height:19px"></div><div class="combo" style="left:784px;top:91px;width:177px"></div><div class="t" style="left:788.90px;top:93.00px;font-size:14.67px;line-height:20px;color:#4f4f4f;font-weight:bold;letter-spacing:-0.050px;">ByLayer</div><div class="t" style="left:865.60px;top:93.00px;font-size:14.67px;line-height:20px;color:#4f4f4f;font-weight:bold;letter-spacing:-0.090px;">Solid line</div><svg class="abs" style="left:947.6px;top:97.9px" width="8" height="14" viewBox="0 0 8 14"><path d="M1.2 4.6 L4 1.6 L6.8 4.6z M1.2 9.6 L4 12.6 L6.8 9.6z" fill="#606060"/></svg><div class="sep" style="left:967px;top:94px;height:19px"></div><div class="combo" style="left:974px;top:91px;width:177px"></div><div class="abs" style="left:980px;top:102px;width:32px;height:1px;background:#222"></div><div class="t" style="left:1015.00px;top:93.00px;font-size:14.67px;line-height:20px;color:#4f4f4f;font-weight:bold;letter-spacing:-0.150px;">ByLayer</div><svg class="abs" style="left:1137.6px;top:97.9px" width="8" height="14" viewBox="0 0 8 14"><path d="M1.2 4.6 L4 1.6 L6.8 4.6z M1.2 9.6 L4 12.6 L6.8 9.6z" fill="#606060"/></svg>
<div class="abs" style="left:79px;top:126px;width:8px;height:3px;background:repeating-linear-gradient(90deg,#cfccc7 0 1px,transparent 1px 3px)"></div><svg class="abs" style="left:74.8px;top:139.9px;overflow:visible;" width="16" height="16" viewBox="0 0 16 16"><path d="M1.8 1.8 L14 14.2" stroke="#111" stroke-width="1.2" fill="none"/><circle cx="1.8" cy="1.8" r="1.6" fill="#ffd400" stroke="#111" stroke-width="0.8"/><circle cx="14.0" cy="14.2" r="1.6" fill="#ffd400" stroke="#111" stroke-width="0.8"/></svg><svg class="abs" style="left:74.8px;top:171.9px;overflow:visible;" width="16" height="16" viewBox="0 0 16 16"><path d="M1 1 L15 15" stroke="#111" stroke-width="1.2" fill="none"/><path d="M0.4 0.4 l4.4 1.2 l-3.2 3.2z M15.6 15.6 l-4.4 -1.2 l3.2 -3.2z" fill="#111"/><circle cx="8.0" cy="8.0" r="1.6" fill="#ffd400" stroke="#111" stroke-width="0.8"/></svg><svg class="abs" style="left:74.8px;top:203.9px;overflow:visible;" width="16" height="16" viewBox="0 0 16 16"><path d="M0.6 7.8 L4.2 1.2 H11.8 L15.4 7.8 L11.8 14.4 H4.2z" stroke="#111" stroke-width="1.2" fill="none"/></svg><svg class="abs" style="left:74.8px;top:235.9px;overflow:visible;" width="16" height="16" viewBox="0 0 16 16"><rect x="1.6" y="4.6" width="12.6" height="7.4" stroke="#111" stroke-width="1.2" fill="none"/><circle cx="1.6" cy="4.6" r="1.6" fill="#ffd400" stroke="#111" stroke-width="0.8"/><circle cx="14.2" cy="12.0" r="1.6" fill="#ffd400" stroke="#111" stroke-width="0.8"/></svg><svg class="abs" style="left:74.8px;top:267.9px;overflow:visible;" width="16" height="16" viewBox="0 0 16 16"><path d="M2.2 7 Q4 1.6 8.6 2 Q13 2.8 13.6 7 M2.2 7 Q4 11.6 8.4 15" stroke="#111" stroke-width="1.2" fill="none"/><circle cx="2.2" cy="7.0" r="1.6" fill="#ffd400" stroke="#111" stroke-width="0.8"/><circle cx="13.6" cy="7.0" r="1.6" fill="#ffd400" stroke="#111" stroke-width="0.8"/><circle cx="8.4" cy="15.0" r="1.6" fill="#ffd400" stroke="#111" stroke-width="0.8"/></svg><svg class="abs" style="left:74.8px;top:299.9px;overflow:visible;" width="16" height="16" viewBox="0 0 16 16"><path d="M1.4 3 Q7 4 9.6 7 Q12.6 10.6 13.6 15" stroke="#111" stroke-width="1.2" fill="none"/><circle cx="1.4" cy="3.0" r="1.6" fill="#ffd400" stroke="#111" stroke-width="0.8"/><circle cx="9.6" cy="7.0" r="1.6" fill="#ffd400" stroke="#111" stroke-width="0.8"/><circle cx="13.6" cy="15.0" r="1.6" fill="#ffd400" stroke="#111" stroke-width="0.8"/></svg><svg class="abs" style="left:74.8px;top:331.9px;overflow:visible;" width="16" height="16" viewBox="0 0 16 16"><circle cx="8" cy="8" r="7.4" stroke="#111" stroke-width="1.2" fill="none"/><path d="M8 8 L13 13" stroke="#111" stroke-width="1.2" fill="none"/><circle cx="8.0" cy="8.0" r="1.6" fill="#ffd400" stroke="#111" stroke-width="0.8"/><circle cx="13.0" cy="13.0" r="1.6" fill="#ffd400" stroke="#111" stroke-width="0.8"/></svg><svg class="abs" style="left:74.8px;top:363.9px;overflow:visible;" width="16" height="16" viewBox="0 0 16 16"><ellipse cx="8" cy="8.6" rx="8.4" ry="4.6" transform="rotate(-40 8 8.6)" stroke="#111" stroke-width="1.2" fill="none"/><path d="M5 9 h4.4 M7.2 6.8 v4.4" stroke="#111" stroke-width="1"/><circle cx="14.0" cy="1.6" r="1.6" fill="#ffd400" stroke="#111" stroke-width="0.8"/><circle cx="4.8" cy="4.8" r="1.6" fill="#ffd400" stroke="#111" stroke-width="0.8"/><circle cx="1.8" cy="14.4" r="1.6" fill="#ffd400" stroke="#111" stroke-width="0.8"/></svg><svg class="abs" style="left:74.8px;top:395.9px;overflow:visible;" width="16" height="16" viewBox="0 0 16 16"><path d="M2 14 Q2.6 5 9 2.2 Q15 0.6 14.2 6 Q13.6 10.6 10.2 13.6" stroke="#111" stroke-width="1.2" fill="none"/><path d="M6 8.4 h4.4 M8.2 6.2 v4.4" stroke="#111" stroke-width="1"/><circle cx="2.0" cy="14.0" r="1.6" fill="#ffd400" stroke="#111" stroke-width="0.8"/><circle cx="10.2" cy="13.6" r="1.6" fill="#ffd400" stroke="#111" stroke-width="0.8"/></svg><svg class="abs" style="left:74.8px;top:427.9px;overflow:visible;" width="16" height="16" viewBox="0 0 16 16"><circle cx="2.0" cy="3.4" r="1.6" fill="#ffd400" stroke="#111" stroke-width="0.8"/><circle cx="11.4" cy="2.4" r="1.6" fill="#ffd400" stroke="#111" stroke-width="0.8"/><circle cx="6.2" cy="7.2" r="1.6" fill="#ffd400" stroke="#111" stroke-width="0.8"/><circle cx="2.0" cy="13.6" r="1.6" fill="#ffd400" stroke="#111" stroke-width="0.8"/><circle cx="8.2" cy="12.4" r="1.6" fill="#ffd400" stroke="#111" stroke-width="0.8"/><circle cx="13.6" cy="14.6" r="1.6" fill="#ffd400" stroke="#111" stroke-width="0.8"/></svg><svg class="abs" style="left:74.8px;top:459.9px;overflow:visible;" width="16" height="16" viewBox="0 0 16 16"><path d="M2 14 Q3 6 7 7.4 Q10 9 11 11 Q13.6 10 14.2 3" stroke="#111" stroke-width="1.2" fill="none"/><circle cx="2.0" cy="14.0" r="1.6" fill="#ffd400" stroke="#111" stroke-width="0.8"/><circle cx="14.2" cy="3.0" r="1.6" fill="#ffd400" stroke="#111" stroke-width="0.8"/></svg><svg class="abs" style="left:74.8px;top:491.9px;overflow:visible;" width="16" height="16" viewBox="0 0 16 16"><defs><pattern id="hp" width="2.2" height="2.2" patternUnits="userSpaceOnUse" patternTransform="rotate(-45)"><rect width="2.2" height="1" fill="#555"/></pattern></defs><rect x="0.6" y="1" width="15" height="14" fill="#e6e6e6"/><rect x="0.6" y="1" width="15" height="14" fill="url(#hp)" stroke="#888" stroke-width="0.6"/></svg><svg class="abs" style="left:74.8px;top:523.9px;overflow:visible;" width="16" height="16" viewBox="0 0 16 16"><rect x="0.6" y="0.6" width="13.4" height="13.4" fill="#fafafa" stroke="#9a9a9a" stroke-width="0.8"/><path d="M2 10.6 L5.4 2.4 L8.8 10.6 M3.4 7.6 h4" stroke="#333" stroke-width="1.2" fill="none"/><circle cx="11" cy="3.2" r="1.4" fill="none" stroke="#555" stroke-width="0.7"/><circle cx="11.6" cy="11.8" r="4" fill="#1fa31f" stroke="#117a11" stroke-width="0.6"/><path d="M9.3 11.8 h4.6 M11.6 9.5 v4.6" stroke="#fff" stroke-width="1.5"/></svg><svg class="abs" style="left:74.8px;top:555.9px;overflow:visible;" width="16" height="16" viewBox="0 0 16 16"><path d="M4.6 1 H15 V10 L11 14.6 H1 V4.6z" fill="#f7d64a" stroke="#7a7a7a" stroke-width="1.1"/><path d="M4.4 9 V5.6 H11.6 V9 H9.6 Q8 6.8 6.4 9z" fill="#f2f1f0" stroke="#555" stroke-width="0.9"/></svg><svg class="abs" style="left:74.8px;top:587.9px;overflow:visible;" width="16" height="16" viewBox="0 0 16 16"><rect x="0.6" y="1" width="14.8" height="13.6" fill="#fafafa" stroke="#8a8a8a" stroke-width="0.9"/><path d="M2.4 7.2 L4.4 3 L6.4 7.2 M3.2 5.8 h2.4" stroke="#222" stroke-width="1.1" fill="none"/><path d="M7.6 5.8 h6 M7.6 8 h6 M2.4 10.2 h11.2 M2.4 12.4 h11.2" stroke="#bdbdbd" stroke-width="0.8"/></svg><svg class="abs" style="left:74.8px;top:619.9px;overflow:visible;" width="16" height="16" viewBox="0 0 16 16"><rect x="0.6" y="4" width="14.8" height="8" fill="#fafafa" stroke="#8a8a8a" stroke-width="0.9"/><path d="M2.6 10 L4.6 5.8 L6.6 10 M3.4 8.6 h2.4" stroke="#222" stroke-width="1.1" fill="none"/><path d="M8 10 h5" stroke="#bdbdbd" stroke-width="0.8"/></svg><svg class="abs" style="left:74.8px;top:651.9px;overflow:visible;" width="16" height="16" viewBox="0 0 16 16"><path d="M2 2.4 q2 -2 4 0 q2 -2 4 0 q2 -2 4 0 q2 2 0 4 q2 2 0 4 q-2 2 -4 0 q-2 2 -4 0 q-2 2 -4 0 q-2 -2 0 -4 q-2 -2 0 -4z" stroke="#000" stroke-width="1.15" fill="#fff" stroke-dasharray="1.8 1.1"/><path d="M11.57 0.82 L13.83 2.78 L4.53 13.48 L1.4 14.8 L2.27 11.52z" fill="#f2c81e" stroke="#8a6a10" stroke-width="0.7"/><path d="M12 1.6 L3 12" stroke="#fbe88a" stroke-width="0.8"/><path d="M11.57 0.82 L13.83 2.78 L12.52 4.29 L10.26 2.33z" fill="#ee8a8a" stroke="#a85a5a" stroke-width="0.5"/><path d="M3.1 13.9 L1.2 15 L1.9 12.8z" fill="#333"/></svg><svg class="abs" style="left:74.8px;top:683.9px;overflow:visible;" width="16" height="16" viewBox="0 0 16 16"><path d="M2 2.6 q2 -2 4 0 q2 -2 4 0 q2 -2 4 0 q2 2 0 3.6 q2 2 0 3.6 q2 2 0 3.6 q-2 2 -4 0 q-2 2 -4 0 q-2 2 -4 0 q-2 -2 0 -3.6 q-2 -2 0 -3.6 q-2 -2 0 -3.6z" stroke="#000" stroke-width="1.15" fill="none" stroke-dasharray="1.9 1.0"/></svg><svg class="abs" style="left:80.5px;top:722px;" width="7" height="9" viewBox="0 0 7 9"><path d="M0.6 0.6 L3.4 3.4 L6.2 0.6 M0.6 4.6 L3.4 7.4 L6.2 4.6" stroke="#111" stroke-width="1.4" fill="none"/></svg>
<div class="t" style="left:103.10px;top:124.00px;font-size:14.67px;line-height:20px;color:#4f4f4f;font-weight:bold;letter-spacing:0.160px;">Properties</div><svg class="abs" style="left:302px;top:128px;" width="11" height="11" viewBox="0 0 11 11"><rect x="0.5" y="0.5" width="10" height="10" rx="2" fill="#f7f6f5" stroke="#6e6e6e" stroke-width="1"/><rect x="4" y="2.4" width="4.2" height="4" fill="none" stroke="#444" stroke-width="0.9"/><rect x="2.6" y="4.4" width="4.2" height="4" fill="#f7f6f5" stroke="#444" stroke-width="0.9"/></svg><svg class="abs" style="left:319px;top:128px;" width="11" height="11" viewBox="0 0 11 11"><rect x="0.5" y="0.5" width="10" height="10" rx="2" fill="#f7f6f5" stroke="#6e6e6e" stroke-width="1"/><path d="M3 3 L8 8 M8 3 L3 8" stroke="#333" stroke-width="2"/></svg><div class="combo" style="left:113px;top:158px;width:124px;height:24.5px"></div><div class="t" style="left:118.30px;top:161.00px;font-size:14.67px;line-height:20px;color:#4f4f4f;font-weight:bold;letter-spacing:-0.032px;">No Selection</div><svg class="abs" style="left:223.6px;top:165.7px" width="8" height="14" viewBox="0 0 8 14"><path d="M1.2 4.6 L4 1.6 L6.8 4.6z M1.2 9.6 L4 12.6 L6.8 9.6z" fill="#606060"/></svg><div class="combo" style="left:245px;top:159px;width:20px;height:22px;border-radius:4px"></div><div class="combo" style="left:273px;top:159px;width:20px;height:22px;border-radius:4px"></div><div class="combo" style="left:301px;top:159px;width:20px;height:22px;border-radius:4px"></div><svg class="abs" style="left:248px;top:163px;" width="14" height="16" viewBox="0 0 14 16"><path d="M1 1 v8 M3.4 1 v8 M5.8 1 v5" stroke="#555" stroke-width="1"/><path d="M6 3 L6 13 L8.4 10.8 L10.2 14.6 L11.8 13.8 L10 10.2 L13 10z" fill="#fff" stroke="#222" stroke-width="0.9"/></svg><svg class="abs" style="left:276px;top:162px;" width="14" height="16" viewBox="0 0 14 16"><rect x="0.6" y="0.6" width="10" height="8" fill="#7a8a9a" stroke="#333" stroke-width="0.9"/><rect x="2" y="2" width="7.2" height="4" fill="#c9d6e4"/><path d="M6.6 4.4 L6.6 14 L9 11.8 L10.8 15.4 L12.4 14.6 L10.6 11.2 L13.6 11z" fill="#fff" stroke="#222" stroke-width="0.9"/></svg><svg class="abs" style="left:304px;top:162px;" width="14" height="16" viewBox="0 0 14 16"><rect x="0.6" y="0.6" width="10" height="8" fill="#8a8a8a" stroke="#444" stroke-width="0.9"/><rect x="2" y="2" width="7.2" height="4" fill="#c9c9c9"/><path d="M9.6 3 L5.6 9.6 H8.4 L6.6 15 L12.6 7.6 H9.6 L12 3z" fill="#f4c020" stroke="#a67c10" stroke-width="0.6"/></svg><div class="abs" style="left:112px;top:190px;width:194px;height:454px;border:1px solid #c6c2bb;overflow:hidden" id="pf"></div><div class="abs" style="left:309px;top:190px;width:13px;height:454px;border-radius:6.5px;background:linear-gradient(90deg,#dbd8d5,#e7e5e3);border:1px solid #b9b5ae;border-left-color:#a9a59f"></div><div class="abs" style="left:309px;top:190px;width:13px;height:20px;border-radius:6.5px 6.5px 0 0;background:#f6f5f4;border:1px solid #b9b5ae;border-bottom:none"></div><div class="abs" style="left:309px;top:624px;width:13px;height:20px;border-radius:0 0 6.5px 6.5px;background:#f8f7f6;border:1px solid #b9b5ae;border-top:none"></div><div class="abs" style="left:310px;top:618px;width:11px;height:13px;border-radius:0 0 5.5px 5.5px;background:linear-gradient(90deg,#dbd8d5,#e7e5e3);border-bottom:1px solid #c4c0ba"></div><div class="abs" style="left:309px;top:203px;width:13px;height:290px;border-radius:6.5px;background:linear-gradient(90deg,#ffffff,#f4f3f2 50%,#e4e2df);border:1px solid #9e9a94"></div><svg class="abs" style="left:313.5px;top:196.6px;" width="5" height="3" viewBox="0 0 5 3"><path d="M0.4 2.6 L2.4 0.6 L4.4 2.6z" fill="#c2bfb9"/></svg><svg class="abs" style="left:313px;top:634.6px;" width="6" height="4" viewBox="0 0 6 4"><path d="M0.2 0.4 L2.8 3.6 L5.4 0.4z" fill="#5a5a5a"/></svg><svg class="abs" style="left:312.5px;top:344px;" width="7" height="8" viewBox="0 0 7 8"><path d="M1 1 h5 M1 3.6 h5 M1 6.2 h5" stroke="#b0aca6" stroke-width="1"/></svg><div class="t" style="left:122.00px;top:201.00px;font-size:14.67px;line-height:20px;color:#4f4f4f;font-weight:bold;letter-spacing:0.394px;">General</div><div class="t" style="left:122.20px;top:405.00px;font-size:14.67px;line-height:20px;color:#4f4f4f;font-weight:bold;letter-spacing:0.558px;">PrintStyle</div><div class="t" style="left:122.00px;top:528.00px;font-size:14.67px;line-height:20px;color:#4f4f4f;font-weight:bold;letter-spacing:0.812px;">View</div><div class="field" style="left:170px;top:226px;width:116px;height:25px;"></div><div class="combo" style="left:170px;top:253px;width:116px;height:25px;"></div><div class="combo" style="left:170px;top:280px;width:116px;height:25px;"></div><div class="field" style="left:170px;top:307px;width:116px;height:25px;"></div><div class="combo" style="left:170px;top:334px;width:116px;height:25px;"></div><div class="combo" style="left:170px;top:361px;width:116px;height:25px;"></div><div class="t" style="left:175.00px;top:256.00px;font-size:14.67px;line-height:20px;color:#4f4f4f;font-weight:bold;letter-spacing:-0.057px;">Dim</div><div class="abs" style="left:178.2px;top:286.2px;width:11.6px;height:11.6px;border-radius:50%;background:#0000ee;border:1.1px solid #111"></div><div class="t" style="left:195.30px;top:283.00px;font-size:14.67px;line-height:20px;color:#4f4f4f;font-weight:bold;letter-spacing:-0.197px;">Blue</div><div class="t" style="left:175.40px;top:310.00px;font-size:14.67px;line-height:20px;color:#4f4f4f;font-weight:bold;letter-spacing:0.346px;">1.0000</div><div class="t" style="left:175.00px;top:337.00px;font-size:14.67px;line-height:20px;color:#4f4f4f;font-weight:bold;letter-spacing:-0.117px;">ByLayer</div><div class="abs" style="left:251px;top:338px;width:16px;height:18px;overflow:hidden"><div class="t" style="left:0.80px;top:-1.00px;font-size:14.67px;line-height:20px;color:#4f4f4f;font-weight:bold;">So</div></div><div class="abs" style="left:176px;top:373.5px;width:31.5px;height:1px;background:#222"></div><div class="abs" style="left:210px;top:365px;width:57px;height:18px;overflow:hidden"><div class="t" style="left:1.60px;top:-1.00px;font-size:14.67px;line-height:20px;color:#4f4f4f;font-weight:bold;letter-spacing:-0.117px;">ByLayer</div></div><svg class="abs" style="left:272.6px;top:261.2px" width="8" height="14" viewBox="0 0 8 14"><path d="M1.2 4.6 L4 1.6 L6.8 4.6z M1.2 9.6 L4 12.6 L6.8 9.6z" fill="#606060"/></svg><svg class="abs" style="left:272.6px;top:288.2px" width="8" height="14" viewBox="0 0 8 14"><path d="M1.2 4.6 L4 1.6 L6.8 4.6z M1.2 9.6 L4 12.6 L6.8 9.6z" fill="#606060"/></svg><svg class="abs" style="left:272.6px;top:342.2px" width="8" height="14" viewBox="0 0 8 14"><path d="M1.2 4.6 L4 1.6 L6.8 4.6z M1.2 9.6 L4 12.6 L6.8 9.6z" fill="#606060"/></svg><svg class="abs" style="left:272.6px;top:369.2px" width="8" height="14" viewBox="0 0 8 14"><path d="M1.2 4.6 L4 1.6 L6.8 4.6z M1.2 9.6 L4 12.6 L6.8 9.6z" fill="#606060"/></svg><svg class="abs" style="left:141px;top:230px;overflow:visible;" width="16" height="16" viewBox="0 0 16 16"><defs><radialGradient id="gl" cx="35%" cy="30%" r="70%"><stop offset="0" stop-color="#9fd0ff"/><stop offset="0.5" stop-color="#2a62d8"/><stop offset="1" stop-color="#102a80"/></radialGradient></defs><circle cx="8" cy="7.6" r="7.2" fill="url(#gl)"/><path d="M3 3.6 q3 -2.4 5.6 -1 q-0.4 2.4 -2.6 2.8 q0.6 2.6 -2 3.4 q-1.8 -2 -1 -5.2z M10 5.4 q2.6 -0.6 4.4 1.6 q0 3.2 -2 4.6 q-1.8 -1 -1.4 -3.2z" fill="#1fae2a"/><rect x="5.2" y="11" width="10.4" height="4.6" rx="1.6" fill="#111" stroke="#eee" stroke-width="0.8"/><path d="M7 13.3 h2.4 M11.4 13.3 h2.4 M9 13.3 h3" stroke="#fff" stroke-width="1"/></svg><svg class="abs" style="left:141px;top:257px;overflow:visible;" width="16" height="16" viewBox="0 0 16 16"><path d="M-0.6 8 H12.6 V13.4 H-0.6z" fill="#d8d050"/><path d="M-0.6 8 h13.2 v1 h-13.2z M-0.6 10.2 h13.2 v0.9 h-13.2z M-0.6 12.4 h13.2 v1 h-13.2z" fill="#7e7e34"/><path d="M12.6 8 L17 4.4 V9.6 L12.6 13.4z" fill="#6a6a30"/><path d="M12.6 9.8 l4.4 -3.6 M12.6 11.8 l4.4 -3.6" stroke="#c8c050" stroke-width="0.7"/><path d="M-0.6 8 L5.4 3.6 L8 3.6 L9 2.6 L17 4.4 L12.6 8z" fill="#ffff9e" stroke="#b8b860" stroke-width="0.4"/></svg><svg class="abs" style="left:141px;top:284px;overflow:visible;" width="16" height="16" viewBox="0 0 16 16"><path d="M2 12 q5 5 11 0" stroke="#2a62d8" stroke-width="2.2" fill="none"/><path d="M1.8 4.4 l4 -2.8 l4.2 5 l-4.6 3.4z" fill="#bfc6cc" stroke="#444" stroke-width="0.8"/><path d="M3 3 q1 -3 3.4 -1.6" stroke="#444" stroke-width="0.8" fill="none"/><path d="M15.4 0.6 L9.4 10.4" stroke="#e0a030" stroke-width="2.2" stroke-linecap="round"/><path d="M9.8 9.4 L6.4 14 L10.6 11z" fill="#555"/></svg><svg class="abs" style="left:141px;top:311px;overflow:visible;" width="16" height="16" viewBox="0 0 16 16"><path d="M0 2 h6 M9.6 2 h6.4 M0 5.6 h3.4 M5 5.6 h5.4 M12 5.6 h4 M0 9.2 h2.6 M4 9.2 h2.6 M8 9.2 h2.6 M12 9.2 h2.6 M0 12.8 h1.6 M3 12.8 h1.6 M6 12.8 h1.6 M9 12.8 h1.6 M12 12.8 h1.6" stroke="#111" stroke-width="1.8"/></svg><svg class="abs" style="left:141px;top:338px;overflow:visible;" width="16" height="16" viewBox="0 0 16 16"><path d="M0 1.6 h16" stroke="#111" stroke-width="1.8"/><path d="M0 4.6 h5 M6.6 4.6 h1.6 M10 4.6 h6" stroke="#111" stroke-width="1.5"/><path d="M0 7.8 h1.8 M3.4 7.8 h1.8 M6.8 7.8 h1.8 M10.2 7.8 h1.8 M13.6 7.8 h1.8 M0 11 h1.8 M5 11 h1.8 M10.2 11 h1.8 M0 14 h1.8 M3.4 14 h1.8 M6.8 14 h1.8 M10.2 14 h1.8 M13.6 14 h1.8" stroke="#111" stroke-width="1.8"/></svg><svg class="abs" style="left:141px;top:365px;overflow:visible;" width="16" height="16" viewBox="0 0 16 16"><rect x="0" y="1" width="16" height="3.6" fill="#111"/><rect x="0" y="6.2" width="16" height="2.8" fill="#111"/><rect x="0" y="10.6" width="16" height="1.8" fill="#111"/><rect x="0" y="14" width="16" height="1" fill="#111"/></svg><div class="combo" style="left:170px;top:430px;width:116px;height:25px;"></div><div class="combo" style="left:170px;top:457px;width:116px;height:25px;border-color:#cfccc7;background:#f2f1f0;"></div><div class="field ro" style="left:170px;top:484px;width:116px;height:25px;"></div><div class="t" style="left:175.00px;top:433.00px;font-size:14.67px;line-height:20px;color:#4f4f4f;font-weight:bold;letter-spacing:-0.217px;">acad.ctb</div><div class="t" style="left:175.00px;top:460.00px;font-size:14.67px;line-height:20px;color:#b4b1ac;font-weight:bold;letter-spacing:-0.242px;">ByColor</div><div class="t" style="left:174.40px;top:487.00px;font-size:14.67px;line-height:20px;color:#4f4f4f;font-weight:bold;letter-spacing:0.108px;">None</div><svg class="abs" style="left:272.6px;top:438.2px" width="8" height="14" viewBox="0 0 8 14"><path d="M1.2 4.6 L4 1.6 L6.8 4.6z M1.2 9.6 L4 12.6 L6.8 9.6z" fill="#606060"/></svg><svg class="abs" style="left:272.6px;top:465.2px" width="8" height="14" viewBox="0 0 8 14"><path d="M1.2 4.6 L4 1.6 L6.8 4.6z M1.2 9.6 L4 12.6 L6.8 9.6z" fill="#b8b5b0"/></svg><svg class="abs" style="left:141px;top:434px;overflow:visible;" width="16" height="16" viewBox="0 0 16 16"><path d="M1 1 h9 l3 3 v11 h-12z" fill="#f2f2f2" stroke="#777" stroke-width="0.8"/><path d="M2.6 7.4 h3 M7 7.4 h3" stroke="#111" stroke-width="1.8"/><path d="M15.6 0.6 L7.4 10.6" stroke="#e0a030" stroke-width="2" stroke-linecap="round"/><path d="M7.8 9.6 L1.4 15.4 L8.8 11.2z" fill="#333"/></svg><svg class="abs" style="left:141px;top:461px;overflow:visible;" width="16" height="16" viewBox="0 0 16 16"><defs><linearGradient id="rg" x1="0" y1="0" x2="0" y2="1"><stop offset="0" stop-color="#f7a090"/><stop offset="1" stop-color="#e82010"/></linearGradient><linearGradient id="gg2" x1="0" y1="0" x2="0" y2="1"><stop offset="0" stop-color="#9fe0a8"/><stop offset="1" stop-color="#10a030"/></linearGradient><pattern id="bh" width="2" height="2" patternUnits="userSpaceOnUse" patternTransform="rotate(-50)"><rect width="2" height="1.1" fill="#2a62d8"/></pattern></defs><rect x="0" y="0.6" width="3.6" height="15" fill="url(#rg)"/><rect x="4.6" y="0.6" width="4.6" height="15" fill="url(#gg2)"/><rect x="10.4" y="0.6" width="5.6" height="15" fill="#cfe0ff"/><rect x="10.4" y="0.6" width="5.6" height="15" fill="url(#bh)"/></svg><svg class="abs" style="left:141px;top:488px;overflow:visible;" width="16" height="16" viewBox="0 0 16 16"><defs><linearGradient id="rg" x1="0" y1="0" x2="0" y2="1"><stop offset="0" stop-color="#f7a090"/><stop offset="1" stop-color="#e82010"/></linearGradient><linearGradient id="gg2" x1="0" y1="0" x2="0" y2="1"><stop offset="0" stop-color="#9fe0a8"/><stop offset="1" stop-color="#10a030"/></linearGradient><pattern id="bh" width="2" height="2" patternUnits="userSpaceOnUse" patternTransform="rotate(-50)"><rect width="2" height="1.1" fill="#2a62d8"/></pattern></defs><rect x="0" y="0.6" width="3.6" height="15" fill="url(#rg)"/><rect x="4.6" y="0.6" width="4.6" height="15" fill="url(#gg2)"/><rect x="10.4" y="0.6" width="5.6" height="15" fill="#cfe0ff"/><rect x="10.4" y="0.6" width="5.6" height="15" fill="url(#bh)"/><path d="M16 1 V16 H1z" fill="#fff"/><path d="M16 4.6 V6.8 H10.2 L12.4 4.6z M16 8.4 V11 H6 L8.6 8.4z M16 12.6 V16 H1 L4.4 12.6z" fill="#111"/><path d="M16 1 L1 16" stroke="#111" stroke-width="0.8"/></svg><div class="field ro" style="left:170px;top:553px;width:116px;height:25px;"></div><div class="field ro" style="left:170px;top:580px;width:116px;height:25px;"></div><div class="field ro" style="left:170px;top:607px;width:116px;height:25px;"></div><div class="abs" style="left:113px;top:634px;width:192px;height:8.5px;overflow:hidden"><div class="field ro" style="left:57px;top:0;width:116px;height:25px"></div><div class="t" style="left:62.00px;top:3.00px;font-size:14.67px;line-height:20px;color:#4f4f4f;font-weight:bold;letter-spacing:0.707px;">5470.4809</div><svg class="abs" style="left:28px;top:3px" width="16" height="8" viewBox="0 0 16 8"><path d="M2 1.2 h12" stroke="#111" stroke-width="1.2"/><path d="M8 2.4 l3 3.4 h-6z" fill="#2a62d8"/></svg></div><div class="t" style="left:175.00px;top:556.00px;font-size:14.67px;line-height:20px;color:#4f4f4f;font-weight:bold;letter-spacing:0.634px;">186837.8768</div><div class="t" style="left:173.80px;top:583.00px;font-size:14.67px;line-height:20px;color:#4f4f4f;font-weight:bold;letter-spacing:0.721px;">-58862.1749</div><div class="t" style="left:174.60px;top:610.00px;font-size:14.67px;line-height:20px;color:#4f4f4f;font-weight:bold;letter-spacing:0.506px;">0.0000</div><svg class="abs" style="left:141px;top:557px;overflow:visible;" width="16" height="16" viewBox="0 0 16 16"><path d="M9.6 14.2 A6.8 6.8 0 1 1 14.6 9" stroke="#111" stroke-width="1.1" fill="none"/><circle cx="8" cy="7.4" r="1.6" fill="#ffd400" stroke="#111" stroke-width="0.7"/><text x="11" y="16.6" font-family="Liberation Sans" font-weight="bold" font-size="7.6" fill="#111">X</text></svg><svg class="abs" style="left:141px;top:584px;overflow:visible;" width="16" height="16" viewBox="0 0 16 16"><path d="M9.6 14.2 A6.8 6.8 0 1 1 14.6 9" stroke="#111" stroke-width="1.1" fill="none"/><circle cx="8" cy="7.4" r="1.6" fill="#ffd400" stroke="#111" stroke-width="0.7"/><text x="11" y="16.6" font-family="Liberation Sans" font-weight="bold" font-size="7.6" fill="#111">Y</text></svg><svg class="abs" style="left:141px;top:611px;overflow:visible;" width="16" height="16" viewBox="0 0 16 16"><path d="M9.6 14.2 A6.8 6.8 0 1 1 14.6 9" stroke="#111" stroke-width="1.1" fill="none"/><circle cx="8" cy="7.4" r="1.6" fill="#ffd400" stroke="#111" stroke-width="0.7"/><text x="11" y="16.6" font-family="Liberation Sans" font-weight="bold" font-size="7.6" fill="#111">Z</text></svg>
<div id="canvas"><svg width="991" height="514" viewBox="339 121 991 514" style="position:absolute;left:0;top:0"><defs><filter id="gs" x="-5%" y="-20%" width="110%" height="140%"><feColorMatrix type="saturate" values="0"/></filter></defs><g shape-rendering="crispEdges"><rect x="627.0" y="260.0" width="202.0" height="1.0" fill="#ffffff"/><rect x="627.0" y="545.0" width="202.0" height="1.0" fill="#ffffff"/><rect x="627.0" y="260.0" width="1.0" height="286.0" fill="#ffffff"/><rect x="828.0" y="260.0" width="1.0" height="286.0" fill="#ffffff"/><rect x="630.0" y="264.0" width="2.0" height="278.0" fill="#ffffff"/><rect x="824.0" y="264.0" width="2.0" height="278.0" fill="#ffffff"/><rect x="630.0" y="264.0" width="196.0" height="1.0" fill="#ffffff"/><rect x="630.0" y="541.0" width="196.0" height="1.0" fill="#ffffff"/><rect x="828.0" y="260.0" width="202.0" height="1.0" fill="#ffffff"/><rect x="828.0" y="545.0" width="202.0" height="1.0" fill="#ffffff"/><rect x="828.0" y="260.0" width="1.0" height="286.0" fill="#ffffff"/><rect x="1029.0" y="260.0" width="1.0" height="286.0" fill="#ffffff"/><rect x="831.0" y="264.0" width="2.0" height="278.0" fill="#ffffff"/><rect x="1025.0" y="264.0" width="2.0" height="278.0" fill="#ffffff"/><rect x="831.0" y="264.0" width="196.0" height="1.0" fill="#ffffff"/><rect x="831.0" y="541.0" width="196.0" height="1.0" fill="#ffffff"/></g><g shape-rendering="crispEdges"><rect x="697.2" y="322.0" width="2.8" height="70.0" fill="#808080"/><rect x="697.0" y="322.0" width="0.8" height="8.0" fill="#ffffff"/><rect x="697.0" y="356.0" width="0.8" height="22.0" fill="#ffffff"/><rect x="697.6" y="322.6" width="2.2" height="4.4" rx="1" fill="#000" stroke="#ffffff" stroke-width="0.9"/><rect x="700.1" y="392.0" width="1.0" height="18.0" fill="#808080"/><rect x="697.4" y="420.0" width="2.6" height="46.0" fill="#808080"/><rect x="700.0" y="320.8" width="96.0" height="1.6" fill="#ffffff"/><rect x="732.0" y="320.1" width="12.0" height="1.0" fill="#ffffff"/><rect x="781.0" y="319.5" width="15.0" height="1.0" fill="#ffffff"/><rect x="794.7" y="321.0" width="1.4" height="154.0" fill="#ffffff"/><rect x="792.3" y="336.0" width="1.0" height="137.0" fill="#d8d8d8"/><rect x="716.0" y="472.2" width="13.6" height="3.0" fill="#ffffff"/><rect x="729.6" y="473.8" width="66.4" height="1.2" fill="#ffffff"/><rect x="729.6" y="472.1" width="20.4" height="1.0" fill="#808080"/><rect x="755.0" y="472.4" width="40.0" height="1.6" fill="#808080"/><rect x="760.4" y="472.0" width="1.2" height="3.0" fill="#ffffff"/><rect x="767.4" y="472.0" width="1.2" height="3.0" fill="#ffffff"/><rect x="775.4" y="472.0" width="1.2" height="3.0" fill="#ffffff"/><rect x="783.4" y="472.0" width="1.2" height="3.0" fill="#ffffff"/><rect x="790.4" y="472.0" width="1.2" height="3.0" fill="#ffffff"/><rect x="748.6" y="471.6" width="6" height="2.6" rx="1" fill="#000" stroke="#ffffff" stroke-width="0.9"/><rect x="728.9" y="473.0" width="1.4" height="4.0" fill="#ffffff"/><rect x="737.3" y="473.0" width="1.4" height="3.4" fill="#ffffff"/><rect x="700.0" y="344.2" width="34.6" height="1.6" fill="#ffffff"/><rect x="733.2" y="345.0" width="1.6" height="14.6" fill="#ffffff"/><rect x="724.6" y="358.4" width="9.4" height="1.2" fill="#ffffff"/><rect x="700.0" y="365.6" width="22.6" height="1.6" fill="#ffffff"/><rect x="700.1" y="355.0" width="1.0" height="20.0" fill="#ffffff"/><rect x="698.2" y="357.0" width="1.6" height="17.0" fill="#808080"/><rect x="729.0" y="358.6" width="1.3" height="32.4" fill="#ffffff"/><rect x="700.0" y="389.8" width="53.0" height="1.6" fill="#ffffff"/><rect x="700.6" y="390.4" width="28.4" height="1.2" fill="#ff0000"/><rect x="700.6" y="408.4" width="28.4" height="1.2" fill="#ff0000"/><rect x="700.6" y="407.5" width="28.4" height="1.0" fill="#ffffff"/><rect x="700.3" y="391.0" width="1.0" height="18.0" fill="#808080"/><rect x="742.0" y="322.0" width="1.2" height="34.0" fill="#ffffff"/><rect x="761.1" y="322.0" width="1.4" height="36.0" fill="#ffffff"/><rect x="742.6" y="355.9" width="19.4" height="1.4" fill="#ffffff"/><rect x="742.6" y="332.9" width="18.4" height="1.0" fill="#808080"/><rect x="742.6" y="344.5" width="18.4" height="1.0" fill="#808080"/><rect x="762.0" y="365.8" width="34.0" height="1.6" fill="#ffffff"/><rect x="761.2" y="366.0" width="1.6" height="47.0" fill="#ffffff"/><rect x="779.3" y="367.0" width="1.4" height="24.0" fill="#ffffff"/><rect x="780.0" y="367.0" width="16.0" height="1.6" fill="#808080"/><rect x="776.4" y="322.0" width="1.2" height="15.0" fill="#ffffff"/><rect x="762.0" y="336.0" width="34.0" height="1.2" fill="#ffffff"/><rect x="789.5" y="337.0" width="1.0" height="29.0" fill="#808080"/><rect x="739" y="391.6" width="13" height="13" fill="none" stroke="#ffffff" stroke-width="1.2"/><rect x="741" y="393.6" width="9" height="9" fill="none" stroke="#808080" stroke-width="0.8"/><line x1="741.0" y1="393.6" x2="750.0" y2="402.6" stroke="#808080" stroke-width="0.8"/><line x1="750.0" y1="393.6" x2="741.0" y2="402.6" stroke="#808080" stroke-width="0.8"/><rect x="751.9" y="391.0" width="1.4" height="14.0" fill="#ff0000"/><rect x="739.0" y="404.8" width="14.0" height="1.2" fill="#ffffff"/><rect x="738.0" y="404.0" width="1.2" height="7.0" fill="#ffffff"/><rect x="730.0" y="410.1" width="9.0" height="1.0" fill="#ffffff"/><rect x="710.4" y="392.0" width="18.6" height="7.6" fill="#808080"/><rect x="716.0" y="399.6" width="13.0" height="8.0" fill="#808080"/><rect x="711.9" y="392.0" width="0.9" height="15.6" fill="#000"/><rect x="714.1" y="392.0" width="0.9" height="15.6" fill="#000"/><rect x="716.3" y="392.0" width="0.9" height="15.6" fill="#000"/><rect x="718.5" y="392.0" width="0.9" height="15.6" fill="#000"/><rect x="720.8" y="392.0" width="0.9" height="15.6" fill="#000"/><rect x="722.9" y="392.0" width="0.9" height="15.6" fill="#000"/><rect x="725.1" y="392.0" width="0.9" height="15.6" fill="#000"/><rect x="727.1" y="392.0" width="0.9" height="15.6" fill="#000"/><rect x="710.0" y="399.2" width="19.0" height="0.8" fill="#000"/><rect x="701" y="365.4" width="7.6" height="7.6" fill="none" stroke="#808080" stroke-width="1"/><line x1="701.6" y1="366.0" x2="708.0" y2="372.4" stroke="#808080" stroke-width="0.9"/><line x1="708.0" y1="366.0" x2="701.6" y2="372.4" stroke="#808080" stroke-width="0.9"/><path d="M699.4 375 L705.4 378.6 V389 H699.4z" fill="#ff8000"/><rect x="705.8" y="372.0" width="1.2" height="17.6" fill="#808080"/><rect x="697.6" y="466.4" width="18.2" height="8.8" fill="#ff8000"/><path d="M703.6 471 v-3.6 h3 l1.6 2 l1.6 -2 h2.6 v3.6" stroke="#808080" stroke-width="0.9" fill="none"/><rect x="697.4" y="465.0" width="4.6" height="1.4" fill="#ffffff"/><path d="M697 431 H703 V433.6 H699.6 V445 H697z" fill="#ffffff"/><rect x="696.8" y="415.6" width="2.6" height="4.6" rx="1.2" fill="#000" stroke="#ffffff" stroke-width="0.9"/><rect x="700.0" y="418.3" width="12.0" height="1.4" fill="#ffffff"/><rect x="710.8" y="418.0" width="1.2" height="3.6" fill="#ffffff"/><rect x="705.0" y="424.1" width="24.6" height="1.0" fill="#808080"/><rect x="729.1" y="410.0" width="1.0" height="15.0" fill="#808080"/><path d="M729.6 358.6 A7.6 7.6 0 0 0 729.6 373.8" stroke="#808080" stroke-width="0.9" fill="none"/><rect x="722.0" y="365.8" width="7.6" height="0.8" fill="#808080"/><path d="M734.6 358.6 Q735.6 353.6 740.6 352.6" stroke="#808080" stroke-width="0.9" fill="none"/><path d="M762.6 358 Q767 360.6 768.6 366" stroke="#808080" stroke-width="0.9" fill="none"/><rect x="700.6" y="404.8" width="6.2" height="1.1" fill="#00ffff"/><rect x="796.0" y="404.8" width="7.4" height="1.1" fill="#00ffff"/><path d="M691 404 l3.6 -3.4 l3 3 l-2 3.4 h-3z" fill="#808080"/><path d="M803.4 404.6 l3.6 -3.6 l3.4 3 l-2.6 3.6 h-2.6z" fill="#808080"/><rect x="701.4" y="324.4" width="20.6" height="2.4" fill="#808080"/><rect x="704.2" y="326.8" width="2.2" height="10.6" fill="#808080"/><rect x="707.8" y="326.8" width="2.2" height="10.6" fill="#808080"/><rect x="711.4" y="326.8" width="2.2" height="10.6" fill="#808080"/><rect x="715.0" y="326.8" width="2.2" height="10.6" fill="#808080"/><rect x="718.2" y="326.8" width="2.2" height="10.6" fill="#808080"/><rect x="703.6" y="326.8" width="17.2" height="10.8" fill="none" stroke="#808080" stroke-width="0.8"/><rect x="724.6" y="324.0" width="3.2" height="3.6" fill="#808080"/><rect x="725.5" y="325.0" width="1.4" height="1.6" fill="#000"/><rect x="728.2" y="324.0" width="3.2" height="3.6" fill="#808080"/><rect x="729.1" y="325.0" width="1.4" height="1.6" fill="#000"/><rect x="731.8" y="324.0" width="3.2" height="3.6" fill="#808080"/><rect x="732.7" y="325.0" width="1.4" height="1.6" fill="#000"/><rect x="735.4" y="324.0" width="3.2" height="3.6" fill="#808080"/><rect x="736.3" y="325.0" width="1.4" height="1.6" fill="#000"/><rect x="724.0" y="334.0" width="15.0" height="1.6" fill="#808080"/><rect x="743.8" y="330.6" width="5.6" height="5.6" fill="none" stroke="#808080" stroke-width="0.9"/><line x1="744.4" y1="331.2" x2="749.0" y2="335.6" stroke="#808080" stroke-width="0.8"/><line x1="749.0" y1="331.2" x2="744.4" y2="335.6" stroke="#808080" stroke-width="0.8"/><rect x="743.8" y="337.6" width="5.6" height="5.6" fill="none" stroke="#808080" stroke-width="0.9"/><line x1="744.4" y1="338.2" x2="749.0" y2="342.6" stroke="#808080" stroke-width="0.8"/><line x1="749.0" y1="338.2" x2="744.4" y2="342.6" stroke="#808080" stroke-width="0.8"/><rect x="744.0" y="326.0" width="6.0" height="4.0" fill="#808080"/><rect x="752.0" y="333.6" width="8.0" height="2.4" fill="#808080"/><rect x="752.0" y="338.6" width="5.0" height="6.4" fill="#808080"/><circle cx="754.6" cy="342.0" r="1.2" stroke="#000" stroke-width="0.8" fill="none" shape-rendering="geometricPrecision"/><rect x="757.6" y="326.6" width="3.4" height="4.4" fill="#808080"/><circle cx="747.4" cy="324.6" r="1.4" stroke="#808080" stroke-width="0.8" fill="none" shape-rendering="geometricPrecision"/><rect x="743.6" y="348.0" width="6.4" height="4.0" fill="none" stroke="#ffffff" stroke-width="0.9"/><rect x="748.0" y="352.0" width="4.0" height="4.0" fill="#ffffff"/><rect x="763.2" y="322.6" width="11.0" height="11.8" fill="#ff8000"/><rect x="763.4" y="324.0" width="3.0" height="4.0" fill="#808080"/><rect x="763.4" y="329.6" width="2.2" height="4.4" fill="#808080"/><rect x="757.4" y="339.6" width="3.8" height="7.0" fill="#ff8000"/><rect x="752.4" y="347.2" width="8.8" height="6.8" fill="#ff8000"/><rect x="752.6" y="348.0" width="3.0" height="2.6" fill="#808080"/><circle cx="758.0" cy="343.0" r="1.0" stroke="#808080" stroke-width="0.8" fill="none" shape-rendering="geometricPrecision"/><path d="M760 352 l2.6 -2 v5z" fill="#808080"/><rect x="774.4" y="322.6" width="6" height="12.4" fill="none" stroke="#ffffff" stroke-width="1.2"/><rect x="781.6" y="325.6" width="8.0" height="1.4" fill="#808080"/><rect x="783.0" y="328.0" width="6.0" height="4.4" fill="#808080"/><rect x="780.0" y="343.0" width="11.0" height="1.6" fill="#808080"/><rect x="780.0" y="346.4" width="11.0" height="1.6" fill="#808080"/><rect x="780.0" y="349.8" width="11.0" height="1.6" fill="#808080"/><rect x="780.0" y="353.2" width="11.0" height="1.6" fill="#808080"/><rect x="779.6" y="341.0" width="1.4" height="15.0" fill="#808080"/><rect x="790.0" y="339.0" width="2.0" height="18.0" fill="#808080"/><rect x="762.6" y="340.0" width="3.8" height="15.6" fill="#808080"/><rect x="762.6" y="343.2" width="3.8" height="0.7" fill="#000"/><rect x="762.6" y="347.0" width="3.8" height="0.7" fill="#000"/><rect x="762.6" y="351.0" width="3.8" height="0.7" fill="#000"/><rect x="771.6" y="359.2" width="16.4" height="1.6" fill="#808080"/><rect x="716.0" y="346.6" width="15.6" height="7.4" fill="#808080"/><rect x="726.0" y="354.0" width="5.6" height="4.6" fill="#808080"/><rect x="708.4" y="355.6" width="13" height="2.2" fill="none" stroke="#808080" stroke-width="0.9"/><rect x="709.0" y="370.0" width="18.0" height="1.2" fill="#808080"/><rect x="709.0" y="373.0" width="18.0" height="1.0" fill="#808080"/><rect x="713.6" y="382.4" width="15.4" height="7.2" fill="#808080"/><rect x="722.0" y="378.6" width="7.0" height="4.4" fill="#808080"/><rect x="714.6" y="386.0" width="13.0" height="0.8" fill="#000"/><rect x="737.6" y="364.8" width="15.6" height="2.2" fill="none" stroke="#808080" stroke-width="0.9"/><rect x="745.0" y="364.8" width="0.8" height="2.2" fill="#808080"/><rect x="743.6" y="374" width="9" height="2" fill="none" stroke="#808080" stroke-width="0.9"/><circle cx="741.4" cy="379.4" r="2.2" stroke="#808080" stroke-width="0.9" fill="none" shape-rendering="geometricPrecision"/><rect x="731.0" y="373.4" width="4.0" height="11.6" fill="#808080"/><rect x="731.0" y="385.0" width="16.4" height="4.0" fill="#808080"/><rect x="731.6" y="375.8" width="2.8" height="0.8" fill="#000"/><rect x="731.6" y="378.8" width="2.8" height="0.8" fill="#000"/><rect x="731.6" y="381.8" width="2.8" height="0.8" fill="#000"/><rect x="736.2" y="385.6" width="0.8" height="2.8" fill="#000"/><rect x="739.6" y="385.6" width="0.8" height="2.8" fill="#000"/><rect x="743.0" y="385.6" width="0.8" height="2.8" fill="#000"/><rect x="765.8" y="370.0" width="10.2" height="46.0" fill="#ff8000"/><rect x="762.4" y="377.0" width="3.6" height="6.6" fill="#ff8000"/><rect x="764.4" y="405.0" width="25.4" height="11.0" fill="#ff8000"/><rect x="781.6" y="391.6" width="8.2" height="14.4" fill="#ff8000"/><rect x="762.6" y="386.0" width="3.4" height="6.0" fill="#808080"/><rect x="762.6" y="393.6" width="2.8" height="3.0" fill="#808080"/><rect x="767.0" y="371.6" width="1" height="1" fill="#000"/><rect x="769.1" y="371.6" width="1" height="1" fill="#000"/><rect x="771.2" y="371.6" width="1" height="1" fill="#000"/><rect x="773.3" y="371.6" width="1" height="1" fill="#000"/><rect x="775.4" y="371.6" width="1" height="1" fill="#000"/><rect x="767.0" y="373.7" width="1" height="1" fill="#000"/><rect x="769.1" y="373.7" width="1" height="1" fill="#000"/><rect x="771.2" y="373.7" width="1" height="1" fill="#000"/><rect x="773.3" y="373.7" width="1" height="1" fill="#000"/><rect x="775.4" y="373.7" width="1" height="1" fill="#000"/><rect x="767.0" y="375.8" width="1" height="1" fill="#000"/><rect x="769.1" y="375.8" width="1" height="1" fill="#000"/><rect x="771.2" y="375.8" width="1" height="1" fill="#000"/><rect x="773.3" y="375.8" width="1" height="1" fill="#000"/><rect x="775.4" y="375.8" width="1" height="1" fill="#000"/><rect x="767.0" y="377.9" width="1" height="1" fill="#000"/><rect x="769.1" y="377.9" width="1" height="1" fill="#000"/><rect x="771.2" y="377.9" width="1" height="1" fill="#000"/><rect x="773.3" y="377.9" width="1" height="1" fill="#000"/><rect x="775.4" y="377.9" width="1" height="1" fill="#000"/><rect x="767.0" y="380.0" width="1" height="1" fill="#000"/><rect x="769.1" y="380.0" width="1" height="1" fill="#000"/><rect x="771.2" y="380.0" width="1" height="1" fill="#000"/><rect x="773.3" y="380.0" width="1" height="1" fill="#000"/><rect x="775.4" y="380.0" width="1" height="1" fill="#000"/><rect x="767.0" y="382.1" width="1" height="1" fill="#000"/><rect x="769.1" y="382.1" width="1" height="1" fill="#000"/><rect x="771.2" y="382.1" width="1" height="1" fill="#000"/><rect x="773.3" y="382.1" width="1" height="1" fill="#000"/><rect x="775.4" y="382.1" width="1" height="1" fill="#000"/><rect x="767.0" y="384.2" width="1" height="1" fill="#000"/><rect x="769.1" y="384.2" width="1" height="1" fill="#000"/><rect x="771.2" y="384.2" width="1" height="1" fill="#000"/><rect x="773.3" y="384.2" width="1" height="1" fill="#000"/><rect x="775.4" y="384.2" width="1" height="1" fill="#000"/><rect x="767.0" y="386.3" width="1" height="1" fill="#000"/><rect x="769.1" y="386.3" width="1" height="1" fill="#000"/><rect x="771.2" y="386.3" width="1" height="1" fill="#000"/><rect x="773.3" y="386.3" width="1" height="1" fill="#000"/><rect x="775.4" y="386.3" width="1" height="1" fill="#000"/><rect x="767.0" y="388.4" width="1" height="1" fill="#000"/><rect x="769.1" y="388.4" width="1" height="1" fill="#000"/><rect x="771.2" y="388.4" width="1" height="1" fill="#000"/><rect x="773.3" y="388.4" width="1" height="1" fill="#000"/><rect x="775.4" y="388.4" width="1" height="1" fill="#000"/><rect x="767.0" y="390.5" width="1" height="1" fill="#000"/><rect x="769.1" y="390.5" width="1" height="1" fill="#000"/><rect x="771.2" y="390.5" width="1" height="1" fill="#000"/><rect x="773.3" y="390.5" width="1" height="1" fill="#000"/><rect x="775.4" y="390.5" width="1" height="1" fill="#000"/><rect x="767.0" y="392.6" width="1" height="1" fill="#000"/><rect x="769.1" y="392.6" width="1" height="1" fill="#000"/><rect x="771.2" y="392.6" width="1" height="1" fill="#000"/><rect x="773.3" y="392.6" width="1" height="1" fill="#000"/><rect x="775.4" y="392.6" width="1" height="1" fill="#000"/><rect x="783.8" y="392.6" width="1" height="1" fill="#000"/><rect x="785.9" y="392.6" width="1" height="1" fill="#000"/><rect x="788.0" y="392.6" width="1" height="1" fill="#000"/><rect x="767.0" y="394.7" width="1" height="1" fill="#000"/><rect x="769.1" y="394.7" width="1" height="1" fill="#000"/><rect x="771.2" y="394.7" width="1" height="1" fill="#000"/><rect x="773.3" y="394.7" width="1" height="1" fill="#000"/><rect x="775.4" y="394.7" width="1" height="1" fill="#000"/><rect x="783.8" y="394.7" width="1" height="1" fill="#000"/><rect x="785.9" y="394.7" width="1" height="1" fill="#000"/><rect x="788.0" y="394.7" width="1" height="1" fill="#000"/><rect x="767.0" y="396.8" width="1" height="1" fill="#000"/><rect x="769.1" y="396.8" width="1" height="1" fill="#000"/><rect x="771.2" y="396.8" width="1" height="1" fill="#000"/><rect x="773.3" y="396.8" width="1" height="1" fill="#000"/><rect x="775.4" y="396.8" width="1" height="1" fill="#000"/><rect x="783.8" y="396.8" width="1" height="1" fill="#000"/><rect x="785.9" y="396.8" width="1" height="1" fill="#000"/><rect x="788.0" y="396.8" width="1" height="1" fill="#000"/><rect x="767.0" y="398.9" width="1" height="1" fill="#000"/><rect x="769.1" y="398.9" width="1" height="1" fill="#000"/><rect x="771.2" y="398.9" width="1" height="1" fill="#000"/><rect x="773.3" y="398.9" width="1" height="1" fill="#000"/><rect x="775.4" y="398.9" width="1" height="1" fill="#000"/><rect x="783.8" y="398.9" width="1" height="1" fill="#000"/><rect x="785.9" y="398.9" width="1" height="1" fill="#000"/><rect x="788.0" y="398.9" width="1" height="1" fill="#000"/><rect x="767.0" y="401.0" width="1" height="1" fill="#000"/><rect x="769.1" y="401.0" width="1" height="1" fill="#000"/><rect x="771.2" y="401.0" width="1" height="1" fill="#000"/><rect x="773.3" y="401.0" width="1" height="1" fill="#000"/><rect x="775.4" y="401.0" width="1" height="1" fill="#000"/><rect x="783.8" y="401.0" width="1" height="1" fill="#000"/><rect x="785.9" y="401.0" width="1" height="1" fill="#000"/><rect x="788.0" y="401.0" width="1" height="1" fill="#000"/><rect x="767.0" y="403.1" width="1" height="1" fill="#000"/><rect x="769.1" y="403.1" width="1" height="1" fill="#000"/><rect x="771.2" y="403.1" width="1" height="1" fill="#000"/><rect x="773.3" y="403.1" width="1" height="1" fill="#000"/><rect x="775.4" y="403.1" width="1" height="1" fill="#000"/><rect x="783.8" y="403.1" width="1" height="1" fill="#000"/><rect x="785.9" y="403.1" width="1" height="1" fill="#000"/><rect x="788.0" y="403.1" width="1" height="1" fill="#000"/><rect x="767.0" y="405.2" width="1" height="1" fill="#000"/><rect x="769.1" y="405.2" width="1" height="1" fill="#000"/><rect x="771.2" y="405.2" width="1" height="1" fill="#000"/><rect x="773.3" y="405.2" width="1" height="1" fill="#000"/><rect x="775.4" y="405.2" width="1" height="1" fill="#000"/><rect x="783.8" y="405.2" width="1" height="1" fill="#000"/><rect x="785.9" y="405.2" width="1" height="1" fill="#000"/><rect x="788.0" y="405.2" width="1" height="1" fill="#000"/><rect x="767.0" y="407.3" width="1" height="1" fill="#000"/><rect x="769.1" y="407.3" width="1" height="1" fill="#000"/><rect x="771.2" y="407.3" width="1" height="1" fill="#000"/><rect x="773.3" y="407.3" width="1" height="1" fill="#000"/><rect x="775.4" y="407.3" width="1" height="1" fill="#000"/><rect x="777.5" y="407.3" width="1" height="1" fill="#000"/><rect x="779.6" y="407.3" width="1" height="1" fill="#000"/><rect x="781.7" y="407.3" width="1" height="1" fill="#000"/><rect x="783.8" y="407.3" width="1" height="1" fill="#000"/><rect x="785.9" y="407.3" width="1" height="1" fill="#000"/><rect x="788.0" y="407.3" width="1" height="1" fill="#000"/><rect x="767.0" y="409.4" width="1" height="1" fill="#000"/><rect x="769.1" y="409.4" width="1" height="1" fill="#000"/><rect x="771.2" y="409.4" width="1" height="1" fill="#000"/><rect x="773.3" y="409.4" width="1" height="1" fill="#000"/><rect x="775.4" y="409.4" width="1" height="1" fill="#000"/><rect x="777.5" y="409.4" width="1" height="1" fill="#000"/><rect x="779.6" y="409.4" width="1" height="1" fill="#000"/><rect x="781.7" y="409.4" width="1" height="1" fill="#000"/><rect x="783.8" y="409.4" width="1" height="1" fill="#000"/><rect x="785.9" y="409.4" width="1" height="1" fill="#000"/><rect x="788.0" y="409.4" width="1" height="1" fill="#000"/><rect x="767.0" y="411.5" width="1" height="1" fill="#000"/><rect x="769.1" y="411.5" width="1" height="1" fill="#000"/><rect x="771.2" y="411.5" width="1" height="1" fill="#000"/><rect x="773.3" y="411.5" width="1" height="1" fill="#000"/><rect x="775.4" y="411.5" width="1" height="1" fill="#000"/><rect x="777.5" y="411.5" width="1" height="1" fill="#000"/><rect x="779.6" y="411.5" width="1" height="1" fill="#000"/><rect x="781.7" y="411.5" width="1" height="1" fill="#000"/><rect x="783.8" y="411.5" width="1" height="1" fill="#000"/><rect x="785.9" y="411.5" width="1" height="1" fill="#000"/><rect x="788.0" y="411.5" width="1" height="1" fill="#000"/><rect x="767.0" y="413.6" width="1" height="1" fill="#000"/><rect x="769.1" y="413.6" width="1" height="1" fill="#000"/><rect x="771.2" y="413.6" width="1" height="1" fill="#000"/><rect x="773.3" y="413.6" width="1" height="1" fill="#000"/><rect x="775.4" y="413.6" width="1" height="1" fill="#000"/><rect x="777.5" y="413.6" width="1" height="1" fill="#000"/><rect x="779.6" y="413.6" width="1" height="1" fill="#000"/><rect x="781.7" y="413.6" width="1" height="1" fill="#000"/><rect x="783.8" y="413.6" width="1" height="1" fill="#000"/><rect x="785.9" y="413.6" width="1" height="1" fill="#000"/><rect x="788.0" y="413.6" width="1" height="1" fill="#000"/><rect x="772.0" y="408.6" width="9.0" height="1.6" fill="#808080"/><rect x="790.0" y="392.0" width="3.0" height="20.6" fill="#808080"/><rect x="761.4" y="412.0" width="31.6" height="7.0" fill="none" stroke="#808080" stroke-width="1"/><rect x="769.6" y="419.0" width="13.4" height="3.6" fill="#808080"/><rect x="778.7" y="391.0" width="1.4" height="14.0" fill="#ffffff"/><path d="M702.4 410.8 H711 V417.4 H702.4z" fill="#ff8000"/><path d="M714 410.8 H728.4 L726 416 L721 419.6 H714z" fill="#ff8000"/><rect x="704.0" y="412.0" width="5.0" height="3.6" fill="#808080"/><rect x="716.0" y="415.0" width="4.4" height="4.6" fill="#808080"/><rect x="723.0" y="411.0" width="4.6" height="3.0" fill="#808080"/><path d="M721 419.6 l5 -3.6 l2.4 0 v3.6z" fill="#808080"/><path d="M731.6 409.6 l6.6 0.4 l-4 4z" fill="#808080"/><rect x="738.4" y="417" width="13.4" height="4.4" fill="none" stroke="#808080" stroke-width="1"/><rect x="741.0" y="417.6" width="8.0" height="1.8" fill="#808080"/><rect x="752.0" y="415.0" width="1.2" height="7.0" fill="#ffffff"/><rect x="703.0" y="442.0" width="6.4" height="20.4" fill="#808080"/><rect x="709.4" y="457.0" width="4.0" height="5.4" fill="#808080"/><rect x="704.4" y="445.4" width="3.2" height="2.0" fill="#000"/><rect x="704.4" y="449.2" width="3.2" height="2.0" fill="#000"/><rect x="704.4" y="453.0" width="3.2" height="2.0" fill="#000"/><rect x="704.4" y="456.8" width="3.2" height="2.0" fill="#000"/><rect x="710.0" y="458.4" width="2.4" height="2.6" fill="#000"/><circle cx="713.0" cy="450.4" r="1.9" stroke="#808080" stroke-width="0.9" fill="none" shape-rendering="geometricPrecision"/><rect x="729.0" y="440.0" width="21.4" height="6.0" fill="#808080"/><rect x="743.6" y="446.0" width="6.8" height="15.0" fill="#808080"/><rect x="731.0" y="441.6" width="2.4" height="2.8" fill="#000"/><rect x="735.0" y="441.6" width="2.4" height="2.8" fill="#000"/><rect x="739.0" y="441.6" width="2.4" height="2.8" fill="#000"/><rect x="743.0" y="441.6" width="2.4" height="2.8" fill="#000"/><rect x="745.2" y="447.6" width="3.6" height="2.2" fill="#000"/><rect x="745.2" y="451.6" width="3.6" height="2.2" fill="#000"/><rect x="745.2" y="455.6" width="3.6" height="2.2" fill="#000"/><circle cx="738.6" cy="451.6" r="2.3" stroke="#808080" stroke-width="0.9" fill="none" shape-rendering="geometricPrecision"/><rect x="724" y="456.4" width="9.6" height="2.2" rx="1" fill="none" stroke="#808080" stroke-width="0.9"/><rect x="720.0" y="464.0" width="29.4" height="5.8" fill="#808080"/><rect x="722.0" y="465.4" width="2.6" height="2.6" fill="#000"/><rect x="726.6" y="465.4" width="2.6" height="2.6" fill="#000"/><rect x="731.2" y="465.4" width="2.6" height="2.6" fill="#000"/><rect x="735.8" y="465.4" width="2.6" height="2.6" fill="#000"/><rect x="740.4" y="465.4" width="2.6" height="2.6" fill="#000"/><rect x="745.0" y="465.4" width="2.6" height="2.6" fill="#000"/><rect x="764.0" y="427.2" width="6.2" height="18.8" fill="#808080"/><rect x="765.4" y="429.0" width="3.4" height="2.4" fill="#000"/><rect x="765.4" y="433.4" width="3.4" height="2.4" fill="#000"/><rect x="765.4" y="437.8" width="3.4" height="2.4" fill="#000"/><rect x="765.4" y="442.2" width="3.4" height="2.4" fill="#000"/><rect x="786.0" y="427.2" width="6.2" height="18.8" fill="#808080"/><rect x="787.4" y="429.0" width="3.4" height="2.4" fill="#000"/><rect x="787.4" y="433.4" width="3.4" height="2.4" fill="#000"/><rect x="787.4" y="437.8" width="3.4" height="2.4" fill="#000"/><rect x="787.4" y="442.2" width="3.4" height="2.4" fill="#000"/><circle cx="778.0" cy="436.0" r="3.9" stroke="#808080" stroke-width="0.9" fill="none" shape-rendering="geometricPrecision"/><rect x="772.6" y="429.6" width="10.4" height="2" rx="1" fill="none" stroke="#808080" stroke-width="0.9"/><path d="M766.4 456.4 H786.4 L789.8 459.6 V465 L786.4 468.2 H766.4 L763 465 V459.6z" fill="none" stroke="#808080" stroke-width="1"/><rect x="769.6" y="460.8" width="13.8" height="2.4" fill="#808080"/><rect x="768.0" y="457.4" width="2.2" height="1.4" fill="#808080"/><rect x="768.0" y="465.8" width="2.2" height="1.4" fill="#808080"/><rect x="771.6" y="457.4" width="2.2" height="1.4" fill="#808080"/><rect x="771.6" y="465.8" width="2.2" height="1.4" fill="#808080"/><rect x="775.2" y="457.4" width="2.2" height="1.4" fill="#808080"/><rect x="775.2" y="465.8" width="2.2" height="1.4" fill="#808080"/><rect x="778.8" y="457.4" width="2.2" height="1.4" fill="#808080"/><rect x="778.8" y="465.8" width="2.2" height="1.4" fill="#808080"/><rect x="782.4" y="457.4" width="2.2" height="1.4" fill="#808080"/><rect x="782.4" y="465.8" width="2.2" height="1.4" fill="#808080"/><rect x="764.0" y="460.8" width="1.6" height="2.6" fill="#808080"/><rect x="787.4" y="460.8" width="1.6" height="2.6" fill="#808080"/><rect x="699.9" y="320.9" width="3.5" height="3.5" fill="#ff0000"/><rect x="742.8" y="319.9" width="3.5" height="3.5" fill="#ff0000"/><rect x="792.0" y="319.4" width="3.5" height="3.5" fill="#ff0000"/><rect x="792.0" y="353.6" width="3.5" height="3.5" fill="#ff0000"/><rect x="699.9" y="353.9" width="3.5" height="3.5" fill="#ff0000"/><rect x="742.2" y="354.2" width="3.5" height="3.5" fill="#ff0000"/><rect x="726.9" y="388.6" width="3.5" height="3.5" fill="#ff0000"/><rect x="749.9" y="388.4" width="3.5" height="3.5" fill="#ff0000"/><rect x="792.0" y="388.6" width="3.5" height="3.5" fill="#ff0000"/><rect x="699.6" y="389.2" width="3.5" height="3.5" fill="#ff0000"/><rect x="750.0" y="413.9" width="3.5" height="3.5" fill="#ff0000"/><rect x="791.9" y="413.9" width="3.5" height="3.5" fill="#ff0000"/><rect x="791.9" y="462.2" width="3.5" height="3.5" fill="#ff0000"/><rect x="714.5" y="463.6" width="3.5" height="3.5" fill="#ff0000"/><rect x="699.9" y="463.4" width="3.5" height="3.5" fill="#ff0000"/><rect x="699.9" y="407.6" width="3.5" height="3.5" fill="#ff0000"/><rect x="726.9" y="407.6" width="3.5" height="3.5" fill="#ff0000"/><circle cx="752.0" cy="465.0" r="1.8" stroke="#ff0000" stroke-width="1.0" fill="#ffffff" shape-rendering="geometricPrecision"/></g><circle cx="701.9" cy="298.8" r="3.1" stroke="#ff0000" stroke-width="1.0" fill="none" shape-rendering="geometricPrecision"/><rect x="700.7" y="297.5" width="2.4" height="2.6" fill="#ff0000" opacity="0.75"/><rect x="701.4" y="302.1" width="1.0" height="10.5" fill="#ff0000"/><circle cx="715.3" cy="298.8" r="3.1" stroke="#ff0000" stroke-width="1.0" fill="none" shape-rendering="geometricPrecision"/><rect x="714.1" y="297.5" width="2.4" height="2.6" fill="#ff0000" opacity="0.75"/><rect x="714.8" y="302.1" width="1.0" height="10.5" fill="#ff0000"/><circle cx="729.1" cy="298.8" r="3.1" stroke="#ff0000" stroke-width="1.0" fill="none" shape-rendering="geometricPrecision"/><rect x="727.9" y="297.5" width="2.4" height="2.6" fill="#ff0000" opacity="0.75"/><rect x="728.6" y="302.1" width="1.0" height="10.5" fill="#ff0000"/><circle cx="744.8" cy="297.0" r="3.1" stroke="#ff0000" stroke-width="1.0" fill="none" shape-rendering="geometricPrecision"/><rect x="743.6" y="295.7" width="2.4" height="2.6" fill="#ff0000" opacity="0.75"/><rect x="744.3" y="300.3" width="1.0" height="12.3" fill="#ff0000"/><circle cx="752.0" cy="302.7" r="3.1" stroke="#ff0000" stroke-width="1.0" fill="none" shape-rendering="geometricPrecision"/><rect x="750.8" y="301.4" width="2.4" height="2.6" fill="#ff0000" opacity="0.75"/><rect x="751.5" y="306.0" width="1.0" height="6.6" fill="#ff0000"/><circle cx="793.9" cy="298.8" r="3.1" stroke="#ff0000" stroke-width="1.0" fill="none" shape-rendering="geometricPrecision"/><rect x="792.7" y="297.5" width="2.4" height="2.6" fill="#ff0000" opacity="0.75"/><rect x="793.4" y="302.1" width="1.0" height="10.5" fill="#ff0000"/><rect x="701.4" y="307.0" width="94.0" height="1.2" fill="#ff0000"/><rect x="701.4" y="312.0" width="94.0" height="1.2" fill="#ff0000"/><rect x="707.0" y="308.3" width="3.0" height="1.0" fill="#ff0000"/><rect x="720.0" y="306.2" width="4.0" height="1.6" fill="#ff0000"/><rect x="734.0" y="308.1" width="3.0" height="1.0" fill="#ff0000"/><rect x="746.5" y="308.8" width="4.0" height="1.6" fill="#ff0000"/><rect x="767.0" y="306.4" width="4.0" height="1.2" fill="#ff0000"/><rect x="771.0" y="308.1" width="3.0" height="1.0" fill="#ff0000"/><rect x="750.0" y="312.9" width="4.0" height="1.4" fill="#ff0000"/><line x1="795.4" y1="310.0" x2="797.4" y2="315.0" stroke="#ff0000" stroke-width="1.0"/><rect x="793.4" y="314.7" width="5.6" height="1.4" fill="#ff0000"/><rect x="685.2" y="321.0" width="1.2" height="145.0" fill="#ff0000"/><rect x="689.2" y="320.0" width="1.2" height="146.0" fill="#ff0000"/><circle cx="668.5" cy="313.4" r="3.1" stroke="#ff0000" stroke-width="1.0" fill="none" shape-rendering="geometricPrecision"/><rect x="667.2" y="312.2" width="2.6" height="2.4" fill="#ff0000" opacity="0.75"/><line x1="671.5" y1="314.8" x2="685.0" y2="321.4" stroke="#ff0000" stroke-width="1.1"/><circle cx="667.6" cy="321.8" r="3.1" stroke="#ff0000" stroke-width="1.0" fill="none" shape-rendering="geometricPrecision"/><rect x="666.3" y="320.6" width="2.6" height="2.4" fill="#ff0000" opacity="0.75"/><line x1="670.9" y1="321.7" x2="685.0" y2="321.4" stroke="#ff0000" stroke-width="1.1"/><circle cx="668.5" cy="329.9" r="3.1" stroke="#ff0000" stroke-width="1.0" fill="none" shape-rendering="geometricPrecision"/><rect x="667.2" y="328.7" width="2.6" height="2.4" fill="#ff0000" opacity="0.75"/><line x1="671.4" y1="328.4" x2="685.0" y2="321.4" stroke="#ff0000" stroke-width="1.1"/><circle cx="668.5" cy="355.4" r="3.1" stroke="#ff0000" stroke-width="1.0" fill="none" shape-rendering="geometricPrecision"/><rect x="667.2" y="354.2" width="2.6" height="2.4" fill="#ff0000" opacity="0.75"/><line x1="671.8" y1="355.4" x2="690.0" y2="355.4" stroke="#ff0000" stroke-width="1.1"/><circle cx="668.5" cy="390.5" r="3.1" stroke="#ff0000" stroke-width="1.0" fill="none" shape-rendering="geometricPrecision"/><rect x="667.2" y="389.3" width="2.6" height="2.4" fill="#ff0000" opacity="0.75"/><line x1="671.8" y1="390.5" x2="690.0" y2="390.5" stroke="#ff0000" stroke-width="1.1"/><circle cx="673.7" cy="410.0" r="3.1" stroke="#ff0000" stroke-width="1.0" fill="none" shape-rendering="geometricPrecision"/><rect x="672.4" y="408.8" width="2.6" height="2.4" fill="#ff0000" opacity="0.75"/><line x1="677.0" y1="410.1" x2="690.0" y2="410.4" stroke="#ff0000" stroke-width="1.1"/><circle cx="668.5" cy="415.6" r="3.1" stroke="#ff0000" stroke-width="1.0" fill="none" shape-rendering="geometricPrecision"/><rect x="667.2" y="414.4" width="2.6" height="2.4" fill="#ff0000" opacity="0.75"/><line x1="671.8" y1="415.6" x2="690.0" y2="415.6" stroke="#ff0000" stroke-width="1.1"/><circle cx="668.5" cy="457.5" r="3.1" stroke="#ff0000" stroke-width="1.0" fill="none" shape-rendering="geometricPrecision"/><rect x="667.2" y="456.3" width="2.6" height="2.4" fill="#ff0000" opacity="0.75"/><line x1="671.5" y1="458.8" x2="686.0" y2="465.2" stroke="#ff0000" stroke-width="1.1"/><circle cx="661.0" cy="464.6" r="3.1" stroke="#ff0000" stroke-width="1.0" fill="none" shape-rendering="geometricPrecision"/><rect x="659.7" y="463.4" width="2.6" height="2.4" fill="#ff0000" opacity="0.75"/><line x1="664.3" y1="464.7" x2="686.0" y2="465.2" stroke="#ff0000" stroke-width="1.1"/><circle cx="668.5" cy="472.5" r="3.1" stroke="#ff0000" stroke-width="1.0" fill="none" shape-rendering="geometricPrecision"/><rect x="667.2" y="471.3" width="2.6" height="2.4" fill="#ff0000" opacity="0.75"/><line x1="671.5" y1="471.2" x2="686.0" y2="465.2" stroke="#ff0000" stroke-width="1.1"/><line x1="683.0" y1="322.0" x2="692.0" y2="317.6" stroke="#ff0000" stroke-width="2.0"/><line x1="690.0" y1="317.6" x2="692.6" y2="316.6" stroke="#ff0000" stroke-width="1.2"/><rect x="682.6" y="320.0" width="5.4" height="3.4" fill="#ff0000"/><rect x="684.6" y="463.0" width="6.0" height="4.6" fill="#ff0000"/><circle cx="690.0" cy="466.6" r="1.6" stroke="#ff0000" stroke-width="0.9" fill="none" shape-rendering="geometricPrecision"/><rect x="684.4" y="337.8" width="3.0" height="1.6" fill="#ff0000"/><rect x="684.4" y="371.8" width="3.0" height="1.6" fill="#ff0000"/><rect x="684.4" y="439.2" width="3.0" height="1.6" fill="#ff0000"/><rect x="687.6" y="391.6" width="4.2" height="2.2" rx="1" fill="none" stroke="#ff0000" stroke-width="0.9"/><circle cx="685.8" cy="400.0" r="1.3" stroke="#ff0000" stroke-width="0.9" fill="none" shape-rendering="geometricPrecision"/><rect x="684.0" y="411.6" width="4.0" height="1.2" fill="#ff0000"/><rect x="684.0" y="413.8" width="4.0" height="1.0" fill="#ff0000"/><g filter="url(#gs)"><text x="634.2" y="531" font-family="Liberation Sans" font-weight="bold" font-size="6.6" fill="#8c8c8c" stroke="#8c8c8c" stroke-width="0.45" textLength="48.6" lengthAdjust="spacingAndGlyphs">2nd Floor Plan</text><text x="674.8" y="536.6" font-family="Liberation Sans" font-weight="bold" font-size="4.6" fill="#8c8c8c" stroke="#8c8c8c" stroke-width="0.4" textLength="19.6" lengthAdjust="spacingAndGlyphs">Sc 1:100</text></g><path d="M810.3 516 L796.6 529.2 H803.4" stroke="#808080" stroke-width="0.8" fill="none"/><path d="M810.3 516.6 L823.6 529.4 L818.4 528.2 L813.4 536 L809.8 535.2 L813.2 527.2 L807.6 521z" fill="#808080"/><path d="M807.6 521 L803.2 526 L806.6 535.4 L809.8 533.6 L807.4 527.4 L810.6 524.2z" fill="#808080"/><path d="M810.3 513.8 V517.2 M808.9 515.2 H811.7" stroke="#808080" stroke-width="0.8"/><g transform="translate(201,0)"><g shape-rendering="crispEdges"><rect x="697.2" y="322.0" width="2.8" height="70.0" fill="#808080"/><rect x="697.0" y="322.0" width="0.8" height="8.0" fill="#ffffff"/><rect x="697.0" y="356.0" width="0.8" height="22.0" fill="#ffffff"/><rect x="697.6" y="322.6" width="2.2" height="4.4" rx="1" fill="#000" stroke="#ffffff" stroke-width="0.9"/><rect x="700.1" y="392.0" width="1.0" height="18.0" fill="#808080"/><rect x="697.4" y="420.0" width="2.6" height="46.0" fill="#808080"/><rect x="700.0" y="320.8" width="96.0" height="1.6" fill="#ffffff"/><rect x="732.0" y="320.1" width="12.0" height="1.0" fill="#ffffff"/><rect x="781.0" y="319.5" width="15.0" height="1.0" fill="#ffffff"/><rect x="794.7" y="321.0" width="1.4" height="154.0" fill="#ffffff"/><rect x="792.3" y="336.0" width="1.0" height="137.0" fill="#d8d8d8"/><rect x="716.0" y="472.2" width="13.6" height="3.0" fill="#ffffff"/><rect x="729.6" y="473.8" width="66.4" height="1.2" fill="#ffffff"/><rect x="729.6" y="472.1" width="20.4" height="1.0" fill="#808080"/><rect x="755.0" y="472.4" width="40.0" height="1.6" fill="#808080"/><rect x="760.4" y="472.0" width="1.2" height="3.0" fill="#ffffff"/><rect x="767.4" y="472.0" width="1.2" height="3.0" fill="#ffffff"/><rect x="775.4" y="472.0" width="1.2" height="3.0" fill="#ffffff"/><rect x="783.4" y="472.0" width="1.2" height="3.0" fill="#ffffff"/><rect x="790.4" y="472.0" width="1.2" height="3.0" fill="#ffffff"/><rect x="748.6" y="471.6" width="6" height="2.6" rx="1" fill="#000" stroke="#ffffff" stroke-width="0.9"/><rect x="728.9" y="473.0" width="1.4" height="4.0" fill="#ffffff"/><rect x="737.3" y="473.0" width="1.4" height="3.4" fill="#ffffff"/><rect x="700.0" y="344.2" width="34.6" height="1.6" fill="#ffffff"/><rect x="733.2" y="345.0" width="1.6" height="14.6" fill="#ffffff"/><rect x="724.6" y="358.4" width="9.4" height="1.2" fill="#ffffff"/><rect x="700.0" y="365.6" width="22.6" height="1.6" fill="#ffffff"/><rect x="700.1" y="355.0" width="1.0" height="20.0" fill="#ffffff"/><rect x="698.2" y="357.0" width="1.6" height="17.0" fill="#808080"/><rect x="729.0" y="358.6" width="1.3" height="32.4" fill="#ffffff"/><rect x="700.0" y="389.8" width="53.0" height="1.6" fill="#ffffff"/><rect x="700.6" y="390.4" width="28.4" height="1.2" fill="#ff0000"/><rect x="700.6" y="408.4" width="28.4" height="1.2" fill="#ff0000"/><rect x="700.6" y="407.5" width="28.4" height="1.0" fill="#ffffff"/><rect x="700.3" y="391.0" width="1.0" height="18.0" fill="#808080"/><rect x="742.0" y="322.0" width="1.2" height="34.0" fill="#ffffff"/><rect x="761.1" y="322.0" width="1.4" height="36.0" fill="#ffffff"/><rect x="742.6" y="355.9" width="19.4" height="1.4" fill="#ffffff"/><rect x="742.6" y="332.9" width="18.4" height="1.0" fill="#808080"/><rect x="742.6" y="344.5" width="18.4" height="1.0" fill="#808080"/><rect x="762.0" y="365.8" width="34.0" height="1.6" fill="#ffffff"/><rect x="761.2" y="366.0" width="1.6" height="47.0" fill="#ffffff"/><rect x="779.3" y="367.0" width="1.4" height="24.0" fill="#ffffff"/><rect x="780.0" y="367.0" width="16.0" height="1.6" fill="#808080"/><rect x="776.4" y="322.0" width="1.2" height="15.0" fill="#ffffff"/><rect x="762.0" y="336.0" width="34.0" height="1.2" fill="#ffffff"/><rect x="789.5" y="337.0" width="1.0" height="29.0" fill="#808080"/><rect x="739" y="391.6" width="13" height="13" fill="none" stroke="#ffffff" stroke-width="1.2"/><rect x="741" y="393.6" width="9" height="9" fill="none" stroke="#808080" stroke-width="0.8"/><line x1="741.0" y1="393.6" x2="750.0" y2="402.6" stroke="#808080" stroke-width="0.8"/><line x1="750.0" y1="393.6" x2="741.0" y2="402.6" stroke="#808080" stroke-width="0.8"/><rect x="751.9" y="391.0" width="1.4" height="14.0" fill="#ff0000"/><rect x="739.0" y="404.8" width="14.0" height="1.2" fill="#ffffff"/><rect x="738.0" y="404.0" width="1.2" height="7.0" fill="#ffffff"/><rect x="730.0" y="410.1" width="9.0" height="1.0" fill="#ffffff"/><rect x="710.4" y="392.0" width="18.6" height="7.6" fill="#808080"/><rect x="716.0" y="399.6" width="13.0" height="8.0" fill="#808080"/><rect x="711.9" y="392.0" width="0.9" height="15.6" fill="#000"/><rect x="714.1" y="392.0" width="0.9" height="15.6" fill="#000"/><rect x="716.3" y="392.0" width="0.9" height="15.6" fill="#000"/><rect x="718.5" y="392.0" width="0.9" height="15.6" fill="#000"/><rect x="720.8" y="392.0" width="0.9" height="15.6" fill="#000"/><rect x="722.9" y="392.0" width="0.9" height="15.6" fill="#000"/><rect x="725.1" y="392.0" width="0.9" height="15.6" fill="#000"/><rect x="727.1" y="392.0" width="0.9" height="15.6" fill="#000"/><rect x="710.0" y="399.2" width="19.0" height="0.8" fill="#000"/><rect x="701" y="365.4" width="7.6" height="7.6" fill="none" stroke="#808080" stroke-width="1"/><line x1="701.6" y1="366.0" x2="708.0" y2="372.4" stroke="#808080" stroke-width="0.9"/><line x1="708.0" y1="366.0" x2="701.6" y2="372.4" stroke="#808080" stroke-width="0.9"/><path d="M699.4 375 L705.4 378.6 V389 H699.4z" fill="#ff8000"/><rect x="705.8" y="372.0" width="1.2" height="17.6" fill="#808080"/><rect x="697.6" y="466.4" width="18.2" height="8.8" fill="#ff8000"/><path d="M703.6 471 v-3.6 h3 l1.6 2 l1.6 -2 h2.6 v3.6" stroke="#808080" stroke-width="0.9" fill="none"/><rect x="697.4" y="465.0" width="4.6" height="1.4" fill="#ffffff"/><path d="M697 431 H703 V433.6 H699.6 V445 H697z" fill="#ffffff"/><rect x="696.8" y="415.6" width="2.6" height="4.6" rx="1.2" fill="#000" stroke="#ffffff" stroke-width="0.9"/><rect x="700.0" y="418.3" width="12.0" height="1.4" fill="#ffffff"/><rect x="710.8" y="418.0" width="1.2" height="3.6" fill="#ffffff"/><rect x="705.0" y="424.1" width="24.6" height="1.0" fill="#808080"/><rect x="729.1" y="410.0" width="1.0" height="15.0" fill="#808080"/><path d="M729.6 358.6 A7.6 7.6 0 0 0 729.6 373.8" stroke="#808080" stroke-width="0.9" fill="none"/><rect x="722.0" y="365.8" width="7.6" height="0.8" fill="#808080"/><path d="M734.6 358.6 Q735.6 353.6 740.6 352.6" stroke="#808080" stroke-width="0.9" fill="none"/><path d="M762.6 358 Q767 360.6 768.6 366" stroke="#808080" stroke-width="0.9" fill="none"/><rect x="700.6" y="404.8" width="6.2" height="1.1" fill="#00ffff"/><rect x="796.0" y="404.8" width="7.4" height="1.1" fill="#00ffff"/><path d="M691 404 l3.6 -3.4 l3 3 l-2 3.4 h-3z" fill="#808080"/><path d="M803.4 404.6 l3.6 -3.6 l3.4 3 l-2.6 3.6 h-2.6z" fill="#808080"/><rect x="743.8" y="330.6" width="5.6" height="5.6" fill="none" stroke="#808080" stroke-width="0.9"/><line x1="744.4" y1="331.2" x2="749.0" y2="335.6" stroke="#808080" stroke-width="0.8"/><line x1="749.0" y1="331.2" x2="744.4" y2="335.6" stroke="#808080" stroke-width="0.8"/><rect x="743.8" y="337.6" width="5.6" height="5.6" fill="none" stroke="#808080" stroke-width="0.9"/><line x1="744.4" y1="338.2" x2="749.0" y2="342.6" stroke="#808080" stroke-width="0.8"/><line x1="749.0" y1="338.2" x2="744.4" y2="342.6" stroke="#808080" stroke-width="0.8"/><rect x="750.6" y="337.0" width="6.4" height="8.0" fill="#808080"/><circle cx="754.0" cy="341.6" r="1.3" stroke="#000" stroke-width="0.8" fill="none" shape-rendering="geometricPrecision"/><circle cx="763.6" cy="324.8" r="1.6" stroke="#808080" stroke-width="0.9" fill="none" shape-rendering="geometricPrecision"/><circle cx="760.0" cy="329.6" r="1.2" stroke="#808080" stroke-width="0.8" fill="none" shape-rendering="geometricPrecision"/><circle cx="763.6" cy="333.6" r="1.2" stroke="#808080" stroke-width="0.8" fill="none" shape-rendering="geometricPrecision"/><rect x="752.0" y="347.6" width="5.0" height="2.4" fill="#808080"/><rect x="737.6" y="365.0" width="14.4" height="2.0" fill="#808080"/><rect x="774.4" y="322.6" width="6" height="12.4" fill="none" stroke="#ffffff" stroke-width="1.2"/><rect x="782" y="324" width="9" height="11" fill="none" stroke="#808080" stroke-width="1"/><rect x="764.6" y="370" width="15" height="20" fill="none" stroke="#808080" stroke-width="1"/><rect x="762.6" y="381.4" width="4" height="9" rx="1" fill="none" stroke="#ffffff" stroke-width="1.2"/><path d="M762 411 h4 v4.6 h28" stroke="#808080" stroke-width="1" fill="none"/><rect x="738.4" y="417" width="11" height="4.4" fill="none" stroke="#808080" stroke-width="1"/><rect x="741.0" y="417.6" width="6.0" height="1.8" fill="#808080"/><rect x="704.0" y="412.0" width="5.0" height="3.6" fill="#808080"/><rect x="716.0" y="415.0" width="4.4" height="4.6" fill="#808080"/><rect x="723.0" y="411.0" width="4.6" height="3.0" fill="#808080"/><path d="M731.6 409.6 l6.6 0.4 l-4 4z" fill="#808080"/><path d="M729.6 358.6 A7.6 7.6 0 0 0 729.6 373.8" stroke="#ffffff" stroke-width="1" fill="none"/><rect x="761.4" y="381" width="3" height="24" fill="none" stroke="#ffffff" stroke-width="1"/><rect x="778.9" y="391.0" width="1.0" height="14.0" fill="#808080"/><g transform="translate(-201,0)"><rect x="900.4" y="330.0" width="43.0" height="1.0" fill="#0000ff"/><rect x="900.4" y="329.5" width="43.0" height="2.0" fill="rgba(0,0,255,0.25)"/><rect x="965.8" y="333.0" width="29.8" height="1.0" fill="#0000ff"/><rect x="965.8" y="332.5" width="29.8" height="2.0" fill="rgba(0,0,255,0.25)"/><rect x="900.4" y="352.0" width="62.4" height="1.0" fill="#0000ff"/><rect x="900.4" y="351.5" width="62.4" height="2.0" fill="rgba(0,0,255,0.25)"/><rect x="963.4" y="358.0" width="31.6" height="1.0" fill="#0000ff"/><rect x="963.4" y="357.5" width="31.6" height="2.0" fill="rgba(0,0,255,0.25)"/><rect x="900.0" y="377.0" width="62.8" height="1.0" fill="#0000ff"/><rect x="900.0" y="376.5" width="62.8" height="2.0" fill="rgba(0,0,255,0.25)"/><rect x="962.8" y="374.0" width="17.8" height="1.0" fill="#0000ff"/><rect x="962.8" y="373.5" width="17.8" height="2.0" fill="rgba(0,0,255,0.25)"/><rect x="952.2" y="391.0" width="42.8" height="1.0" fill="#0000ff"/><rect x="952.2" y="390.5" width="42.8" height="2.0" fill="rgba(0,0,255,0.25)"/><rect x="962.8" y="398.0" width="32.2" height="1.0" fill="#0000ff"/><rect x="962.8" y="397.5" width="32.2" height="2.0" fill="rgba(0,0,255,0.25)"/><rect x="952.2" y="403.0" width="39.0" height="1.0" fill="#0000ff"/><rect x="952.2" y="402.5" width="39.0" height="2.0" fill="rgba(0,0,255,0.25)"/><rect x="952.2" y="419.0" width="42.8" height="1.0" fill="#0000ff"/><rect x="952.2" y="418.5" width="42.8" height="2.0" fill="rgba(0,0,255,0.25)"/><rect x="900.4" y="442.0" width="94.6" height="1.0" fill="#0000ff"/><rect x="900.4" y="441.5" width="94.6" height="2.0" fill="rgba(0,0,255,0.25)"/><rect x="959.8" y="322.0" width="9.0" height="1.0" fill="#0000ff"/><rect x="959.8" y="321.5" width="9.0" height="2.0" fill="rgba(0,0,255,0.25)"/><rect x="943.0" y="350.0" width="17.0" height="1.0" fill="#0000ff"/><rect x="943.0" y="349.5" width="17.0" height="2.0" fill="rgba(0,0,255,0.25)"/><rect x="933.0" y="321.6" width="1.0" height="23.4" fill="#0000ff"/><rect x="932.5" y="321.6" width="2.0" height="23.4" fill="rgba(0,0,255,0.25)"/><rect x="914.0" y="345.0" width="1.0" height="45.6" fill="#0000ff"/><rect x="913.5" y="345.0" width="2.0" height="45.6" fill="rgba(0,0,255,0.25)"/><rect x="947.0" y="321.6" width="1.0" height="32.4" fill="#0000ff"/><rect x="946.5" y="321.6" width="2.0" height="32.4" fill="rgba(0,0,255,0.25)"/><rect x="950.0" y="356.0" width="1.0" height="34.6" fill="#0000ff"/><rect x="949.5" y="356.0" width="2.0" height="34.6" fill="rgba(0,0,255,0.25)"/><rect x="959.0" y="321.6" width="1.0" height="33.8" fill="#0000ff"/><rect x="958.5" y="321.6" width="2.0" height="33.8" fill="rgba(0,0,255,0.25)"/><rect x="968.0" y="321.6" width="1.0" height="11.4" fill="#0000ff"/><rect x="967.5" y="321.6" width="2.0" height="11.4" fill="rgba(0,0,255,0.25)"/><rect x="973.0" y="336.0" width="1.0" height="83.0" fill="#0000ff"/><rect x="972.5" y="336.0" width="2.0" height="83.0" fill="rgba(0,0,255,0.25)"/><rect x="995.0" y="321.6" width="1.0" height="11.4" fill="#0000ff"/><rect x="994.5" y="321.6" width="2.0" height="11.4" fill="rgba(0,0,255,0.25)"/><rect x="980.0" y="386.8" width="1.0" height="3.8" fill="#0000ff"/><rect x="979.5" y="386.8" width="2.0" height="3.8" fill="rgba(0,0,255,0.25)"/><rect x="990.0" y="390.6" width="1.0" height="7.0" fill="#0000ff"/><rect x="989.5" y="390.6" width="2.0" height="7.0" fill="rgba(0,0,255,0.25)"/><rect x="989.0" y="390.6" width="1.0" height="82.0" fill="#0000ff"/><rect x="988.5" y="390.6" width="2.0" height="82.0" fill="rgba(0,0,255,0.25)"/><rect x="962.0" y="397.6" width="1.0" height="21.4" fill="#0000ff"/><rect x="961.5" y="397.6" width="2.0" height="21.4" fill="rgba(0,0,255,0.25)"/><rect x="948.0" y="404.0" width="1.0" height="10.4" fill="#0000ff"/><rect x="947.5" y="404.0" width="2.0" height="10.4" fill="rgba(0,0,255,0.25)"/><rect x="906.0" y="419.0" width="1.0" height="27.0" fill="#0000ff"/><rect x="905.5" y="419.0" width="2.0" height="27.0" fill="rgba(0,0,255,0.25)"/><rect x="921.0" y="410.6" width="1.0" height="13.6" fill="#0000ff"/><rect x="920.5" y="410.6" width="2.0" height="13.6" fill="rgba(0,0,255,0.25)"/><rect x="911.0" y="410.6" width="1.0" height="6.8" fill="#0000ff"/><rect x="910.5" y="410.6" width="2.0" height="6.8" fill="rgba(0,0,255,0.25)"/><rect x="962.0" y="370.0" width="1.0" height="20.6" fill="#0000ff"/><rect x="961.5" y="370.0" width="2.0" height="20.6" fill="rgba(0,0,255,0.25)"/><rect x="945.0" y="340.0" width="1.0" height="14.0" fill="#0000ff"/><rect x="944.5" y="340.0" width="2.0" height="14.0" fill="rgba(0,0,255,0.25)"/><rect x="919.5" y="329.5" width="4.0" height="2.0" fill="#0000ff"/><rect x="931.5" y="334.5" width="4.0" height="2.0" fill="#0000ff"/><rect x="918.5" y="351.5" width="4.0" height="2.0" fill="#0000ff"/><rect x="912.5" y="354.5" width="4.0" height="2.0" fill="#0000ff"/><rect x="945.5" y="351.5" width="4.0" height="2.0" fill="#0000ff"/><rect x="950.5" y="360.5" width="4.0" height="2.0" fill="#0000ff"/><rect x="948.5" y="370.5" width="4.0" height="2.0" fill="#0000ff"/><rect x="912.5" y="377.5" width="4.0" height="2.0" fill="#0000ff"/><rect x="944.5" y="376.5" width="4.0" height="2.0" fill="#0000ff"/><rect x="971.5" y="350.5" width="4.0" height="2.0" fill="#0000ff"/><rect x="977.5" y="357.5" width="4.0" height="2.0" fill="#0000ff"/><rect x="968.5" y="373.5" width="4.0" height="2.0" fill="#0000ff"/><rect x="971.5" y="392.5" width="4.0" height="2.0" fill="#0000ff"/><rect x="977.5" y="397.5" width="4.0" height="2.0" fill="#0000ff"/><rect x="973.5" y="402.5" width="4.0" height="2.0" fill="#0000ff"/><rect x="986.5" y="402.5" width="4.0" height="2.0" fill="#0000ff"/><rect x="987.5" y="445.5" width="4.0" height="2.0" fill="#0000ff"/><rect x="946.5" y="441.5" width="4.0" height="2.0" fill="#0000ff"/><rect x="904.5" y="424.5" width="4.0" height="2.0" fill="#0000ff"/><rect x="904.5" y="437.5" width="4.0" height="2.0" fill="#0000ff"/><rect x="976.5" y="418.5" width="4.0" height="2.0" fill="#0000ff"/><rect x="919.5" y="414.5" width="4.0" height="2.0" fill="#0000ff"/><rect x="961.5" y="332.5" width="4.0" height="2.0" fill="#0000ff"/><rect x="987.5" y="332.5" width="4.0" height="2.0" fill="#0000ff"/><rect x="957.5" y="328.5" width="4.0" height="2.0" fill="#0000ff"/><rect x="991.5" y="328.5" width="4.0" height="2.0" fill="#0000ff"/><circle cx="933.6" cy="333.6" r="1.5" stroke="#0000ff" stroke-width="0.9" fill="none" shape-rendering="geometricPrecision"/><circle cx="914.6" cy="355.6" r="1.5" stroke="#0000ff" stroke-width="0.9" fill="none" shape-rendering="geometricPrecision"/><circle cx="914.6" cy="378.6" r="1.5" stroke="#0000ff" stroke-width="0.9" fill="none" shape-rendering="geometricPrecision"/><circle cx="948.8" cy="405.6" r="1.5" stroke="#0000ff" stroke-width="0.9" fill="none" shape-rendering="geometricPrecision"/><circle cx="971.6" cy="374.5" r="1.5" stroke="#0000ff" stroke-width="0.9" fill="none" shape-rendering="geometricPrecision"/><circle cx="948.0" cy="331.0" r="1.5" stroke="#0000ff" stroke-width="0.9" fill="none" shape-rendering="geometricPrecision"/><circle cx="948.0" cy="338.0" r="1.5" stroke="#0000ff" stroke-width="0.9" fill="none" shape-rendering="geometricPrecision"/><rect x="950.6" y="416.4" width="3.6" height="4.8" fill="none" stroke="#0000ff" stroke-width="1"/></g><rect x="699.9" y="320.9" width="3.5" height="3.5" fill="#ff0000"/><rect x="742.8" y="319.9" width="3.5" height="3.5" fill="#ff0000"/><rect x="792.0" y="319.4" width="3.5" height="3.5" fill="#ff0000"/><rect x="792.0" y="353.6" width="3.5" height="3.5" fill="#ff0000"/><rect x="699.9" y="353.9" width="3.5" height="3.5" fill="#ff0000"/><rect x="742.2" y="354.2" width="3.5" height="3.5" fill="#ff0000"/><rect x="726.9" y="388.6" width="3.5" height="3.5" fill="#ff0000"/><rect x="749.9" y="388.4" width="3.5" height="3.5" fill="#ff0000"/><rect x="792.0" y="388.6" width="3.5" height="3.5" fill="#ff0000"/><rect x="699.6" y="389.2" width="3.5" height="3.5" fill="#ff0000"/><rect x="750.0" y="413.9" width="3.5" height="3.5" fill="#ff0000"/><rect x="791.9" y="413.9" width="3.5" height="3.5" fill="#ff0000"/><rect x="791.9" y="462.2" width="3.5" height="3.5" fill="#ff0000"/><rect x="714.5" y="463.6" width="3.5" height="3.5" fill="#ff0000"/><rect x="699.9" y="463.4" width="3.5" height="3.5" fill="#ff0000"/><rect x="699.9" y="407.6" width="3.5" height="3.5" fill="#ff0000"/><rect x="726.9" y="407.6" width="3.5" height="3.5" fill="#ff0000"/><circle cx="752.0" cy="465.0" r="1.8" stroke="#ff0000" stroke-width="1.0" fill="#ffffff" shape-rendering="geometricPrecision"/></g><circle cx="701.9" cy="298.8" r="3.1" stroke="#ff0000" stroke-width="1.0" fill="none" shape-rendering="geometricPrecision"/><rect x="700.7" y="297.5" width="2.4" height="2.6" fill="#ff0000" opacity="0.75"/><rect x="701.4" y="302.1" width="1.0" height="10.5" fill="#ff0000"/><circle cx="715.3" cy="298.8" r="3.1" stroke="#ff0000" stroke-width="1.0" fill="none" shape-rendering="geometricPrecision"/><rect x="714.1" y="297.5" width="2.4" height="2.6" fill="#ff0000" opacity="0.75"/><rect x="714.8" y="302.1" width="1.0" height="10.5" fill="#ff0000"/><circle cx="729.1" cy="298.8" r="3.1" stroke="#ff0000" stroke-width="1.0" fill="none" shape-rendering="geometricPrecision"/><rect x="727.9" y="297.5" width="2.4" height="2.6" fill="#ff0000" opacity="0.75"/><rect x="728.6" y="302.1" width="1.0" height="10.5" fill="#ff0000"/><circle cx="744.8" cy="297.0" r="3.1" stroke="#ff0000" stroke-width="1.0" fill="none" shape-rendering="geometricPrecision"/><rect x="743.6" y="295.7" width="2.4" height="2.6" fill="#ff0000" opacity="0.75"/><rect x="744.3" y="300.3" width="1.0" height="12.3" fill="#ff0000"/><circle cx="752.0" cy="302.7" r="3.1" stroke="#ff0000" stroke-width="1.0" fill="none" shape-rendering="geometricPrecision"/><rect x="750.8" y="301.4" width="2.4" height="2.6" fill="#ff0000" opacity="0.75"/><rect x="751.5" y="306.0" width="1.0" height="6.6" fill="#ff0000"/><circle cx="793.9" cy="298.8" r="3.1" stroke="#ff0000" stroke-width="1.0" fill="none" shape-rendering="geometricPrecision"/><rect x="792.7" y="297.5" width="2.4" height="2.6" fill="#ff0000" opacity="0.75"/><rect x="793.4" y="302.1" width="1.0" height="10.5" fill="#ff0000"/><rect x="701.4" y="307.0" width="94.0" height="1.2" fill="#ff0000"/><rect x="701.4" y="312.0" width="94.0" height="1.2" fill="#ff0000"/><rect x="707.0" y="308.3" width="3.0" height="1.0" fill="#ff0000"/><rect x="720.0" y="306.2" width="4.0" height="1.6" fill="#ff0000"/><rect x="734.0" y="308.1" width="3.0" height="1.0" fill="#ff0000"/><rect x="746.5" y="308.8" width="4.0" height="1.6" fill="#ff0000"/><rect x="767.0" y="306.4" width="4.0" height="1.2" fill="#ff0000"/><rect x="771.0" y="308.1" width="3.0" height="1.0" fill="#ff0000"/><rect x="750.0" y="312.9" width="4.0" height="1.4" fill="#ff0000"/><line x1="795.4" y1="310.0" x2="797.4" y2="315.0" stroke="#ff0000" stroke-width="1.0"/><rect x="793.4" y="314.7" width="5.6" height="1.4" fill="#ff0000"/><rect x="685.2" y="321.0" width="1.2" height="145.0" fill="#ff0000"/><rect x="689.2" y="320.0" width="1.2" height="146.0" fill="#ff0000"/><circle cx="668.5" cy="313.4" r="3.1" stroke="#ff0000" stroke-width="1.0" fill="none" shape-rendering="geometricPrecision"/><rect x="667.2" y="312.2" width="2.6" height="2.4" fill="#ff0000" opacity="0.75"/><line x1="671.5" y1="314.8" x2="685.0" y2="321.4" stroke="#ff0000" stroke-width="1.1"/><circle cx="667.6" cy="321.8" r="3.1" stroke="#ff0000" stroke-width="1.0" fill="none" shape-rendering="geometricPrecision"/><rect x="666.3" y="320.6" width="2.6" height="2.4" fill="#ff0000" opacity="0.75"/><line x1="670.9" y1="321.7" x2="685.0" y2="321.4" stroke="#ff0000" stroke-width="1.1"/><circle cx="668.5" cy="329.9" r="3.1" stroke="#ff0000" stroke-width="1.0" fill="none" shape-rendering="geometricPrecision"/><rect x="667.2" y="328.7" width="2.6" height="2.4" fill="#ff0000" opacity="0.75"/><line x1="671.4" y1="328.4" x2="685.0" y2="321.4" stroke="#ff0000" stroke-width="1.1"/><circle cx="668.5" cy="355.4" r="3.1" stroke="#ff0000" stroke-width="1.0" fill="none" shape-rendering="geometricPrecision"/><rect x="667.2" y="354.2" width="2.6" height="2.4" fill="#ff0000" opacity="0.75"/><line x1="671.8" y1="355.4" x2="690.0" y2="355.4" stroke="#ff0000" stroke-width="1.1"/><circle cx="668.5" cy="390.5" r="3.1" stroke="#ff0000" stroke-width="1.0" fill="none" shape-rendering="geometricPrecision"/><rect x="667.2" y="389.3" width="2.6" height="2.4" fill="#ff0000" opacity="0.75"/><line x1="671.8" y1="390.5" x2="690.0" y2="390.5" stroke="#ff0000" stroke-width="1.1"/><circle cx="673.7" cy="410.0" r="3.1" stroke="#ff0000" stroke-width="1.0" fill="none" shape-rendering="geometricPrecision"/><rect x="672.4" y="408.8" width="2.6" height="2.4" fill="#ff0000" opacity="0.75"/><line x1="677.0" y1="410.1" x2="690.0" y2="410.4" stroke="#ff0000" stroke-width="1.1"/><circle cx="668.5" cy="415.6" r="3.1" stroke="#ff0000" stroke-width="1.0" fill="none" shape-rendering="geometricPrecision"/><rect x="667.2" y="414.4" width="2.6" height="2.4" fill="#ff0000" opacity="0.75"/><line x1="671.8" y1="415.6" x2="690.0" y2="415.6" stroke="#ff0000" stroke-width="1.1"/><circle cx="668.5" cy="457.5" r="3.1" stroke="#ff0000" stroke-width="1.0" fill="none" shape-rendering="geometricPrecision"/><rect x="667.2" y="456.3" width="2.6" height="2.4" fill="#ff0000" opacity="0.75"/><line x1="671.5" y1="458.8" x2="686.0" y2="465.2" stroke="#ff0000" stroke-width="1.1"/><circle cx="661.0" cy="464.6" r="3.1" stroke="#ff0000" stroke-width="1.0" fill="none" shape-rendering="geometricPrecision"/><rect x="659.7" y="463.4" width="2.6" height="2.4" fill="#ff0000" opacity="0.75"/><line x1="664.3" y1="464.7" x2="686.0" y2="465.2" stroke="#ff0000" stroke-width="1.1"/><circle cx="668.5" cy="472.5" r="3.1" stroke="#ff0000" stroke-width="1.0" fill="none" shape-rendering="geometricPrecision"/><rect x="667.2" y="471.3" width="2.6" height="2.4" fill="#ff0000" opacity="0.75"/><line x1="671.5" y1="471.2" x2="686.0" y2="465.2" stroke="#ff0000" stroke-width="1.1"/><line x1="683.0" y1="322.0" x2="692.0" y2="317.6" stroke="#ff0000" stroke-width="2.0"/><line x1="690.0" y1="317.6" x2="692.6" y2="316.6" stroke="#ff0000" stroke-width="1.2"/><rect x="682.6" y="320.0" width="5.4" height="3.4" fill="#ff0000"/><rect x="684.6" y="463.0" width="6.0" height="4.6" fill="#ff0000"/><circle cx="690.0" cy="466.6" r="1.6" stroke="#ff0000" stroke-width="0.9" fill="none" shape-rendering="geometricPrecision"/><rect x="684.4" y="337.8" width="3.0" height="1.6" fill="#ff0000"/><rect x="684.4" y="371.8" width="3.0" height="1.6" fill="#ff0000"/><rect x="684.4" y="439.2" width="3.0" height="1.6" fill="#ff0000"/><rect x="687.6" y="391.6" width="4.2" height="2.2" rx="1" fill="none" stroke="#ff0000" stroke-width="0.9"/><circle cx="685.8" cy="400.0" r="1.3" stroke="#ff0000" stroke-width="0.9" fill="none" shape-rendering="geometricPrecision"/><rect x="684.0" y="411.6" width="4.0" height="1.2" fill="#ff0000"/><rect x="684.0" y="413.8" width="4.0" height="1.0" fill="#ff0000"/><g filter="url(#gs)"><text x="634.2" y="531" font-family="Liberation Sans" font-weight="bold" font-size="6.6" fill="#8c8c8c" stroke="#8c8c8c" stroke-width="0.45" textLength="48.6" lengthAdjust="spacingAndGlyphs">2nd Floor Plan</text><text x="674.8" y="536.6" font-family="Liberation Sans" font-weight="bold" font-size="4.6" fill="#8c8c8c" stroke="#8c8c8c" stroke-width="0.4" textLength="19.6" lengthAdjust="spacingAndGlyphs">Sc 1:100</text></g><path d="M810.3 516 L796.6 529.2 H803.4" stroke="#808080" stroke-width="0.8" fill="none"/><path d="M810.3 516.6 L823.6 529.4 L818.4 528.2 L813.4 536 L809.8 535.2 L813.2 527.2 L807.6 521z" fill="#808080"/><path d="M807.6 521 L803.2 526 L806.6 535.4 L809.8 533.6 L807.4 527.4 L810.6 524.2z" fill="#808080"/><path d="M810.3 513.8 V517.2 M808.9 515.2 H811.7" stroke="#808080" stroke-width="0.8"/></g><g stroke="#fff" stroke-width="1" fill="none" shape-rendering="crispEdges"><rect x="385.5" y="581.5" width="9" height="9"/><rect x="389.5" y="585.5" width="1" height="1" fill="#fff" stroke="none"/><line x1="389.5" y1="524" x2="389.5" y2="581"/><line x1="395" y1="585.5" x2="451" y2="585.5"/></g><g stroke="#fff" stroke-width="1" fill="none"><path d="M385 532.6 L389.5 524 L394 532.6"/><path d="M442 580.6 L451 585.5 L442 590.4"/><path d="M384 509 L389.5 516 L395 509 M389.5 516 V521.4"/><path d="M455 579 L465 592 M465 579 L455 592"/></g><rect x="540.5" y="450.5" width="6" height="6" fill="none" stroke="#fff" stroke-width="1" shape-rendering="crispEdges"/><path d="M543.6 455 L543.6 466.6 L546.4 464 L549.6 470.8 L551.6 469.8 L548.6 463.2 L552.2 463z" fill="#fff" stroke="#000" stroke-width="0.6"/></svg></div>
<div class="abs" style="left:1344px;top:126px;width:8px;height:3px;background:repeating-linear-gradient(90deg,#cfccc7 0 1px,transparent 1px 3px)"></div><svg class="abs" style="left:1340px;top:140px;overflow:visible;" width="16" height="16" viewBox="0 0 16 16"><path d="M0.4 14.6 h15.6" stroke="#555" stroke-width="1.4"/><path d="M1.6 9.2 L9.4 1.6 Q11 0.6 12.6 1.6 L14.6 3.6 Q15.4 5 14.2 6.4 L7 13.4 H4.2z" fill="#f2a8a0" stroke="#c06a62" stroke-width="0.8"/><path d="M1.6 9.2 L4.2 13.4 H7 L4.6 9.6z" fill="#f8d0ca"/></svg><svg class="abs" style="left:1340px;top:172px;overflow:visible;" width="16" height="16" viewBox="0 0 16 16"><rect x="0.8" y="9.8" width="5.4" height="5.4" fill="#fff" stroke="#111" stroke-width="1"/><rect x="9.8" y="0.8" width="5.4" height="5.4" fill="#fff" stroke="#111" stroke-width="1.2"/><path d="M4.6 11.4 L9.4 6.6" stroke="#1a1aff" stroke-width="1.4"/><path d="M10.6 5.4 l-3.4 0.8 l2.6 2.6z" fill="#1a1aff"/></svg><svg class="abs" style="left:1340px;top:204px;overflow:visible;" width="16" height="16" viewBox="0 0 16 16"><path d="M8.6 1 V15 H15.4 L11.4 1z" stroke="#111" stroke-width="1.3" fill="none"/><path d="M7 1 L4.6 1.6 L0.8 15 H7.4" stroke="#111" stroke-width="1.1" fill="none" stroke-dasharray="1.2 1.2"/></svg><svg class="abs" style="left:1340px;top:236px;overflow:visible;" width="16" height="16" viewBox="0 0 16 16"><rect x="0.8" y="9.8" width="5.4" height="5.4" stroke="#444" stroke-width="1" fill="none" stroke-dasharray="1.4 1.2"/><rect x="9.8" y="0.8" width="5.4" height="5.4" fill="#fff" stroke="#111" stroke-width="1.2"/><path d="M4.6 11.4 L9.4 6.6" stroke="#1a1aff" stroke-width="1.4"/><path d="M10.6 5.4 l-3.4 0.8 l2.6 2.6z" fill="#1a1aff"/></svg><svg class="abs" style="left:1340px;top:267px;overflow:visible;" width="16" height="16" viewBox="0 0 16 16"><path d="M0.6 1 H15.2 V10 L9.8 15.4" stroke="#111" stroke-width="1.3" fill="none"/><path d="M0.6 4.6 H11.6 V8.6 L6 14.2" stroke="#888" stroke-width="1" fill="none" stroke-dasharray="1.6 1.3"/></svg><svg class="abs" style="left:1340px;top:299px;overflow:visible;" width="16" height="16" viewBox="0 0 16 16"><rect x="0.9" y="0.9" width="3.2" height="3.2" fill="#fff" stroke="#111" stroke-width="1.1"/><rect x="6.8" y="0.9" width="3.2" height="3.2" fill="#fff" stroke="#111" stroke-width="1.1"/><rect x="12.7" y="0.9" width="3.2" height="3.2" fill="#fff" stroke="#111" stroke-width="1.1"/><rect x="0.9" y="6.8" width="3.2" height="3.2" fill="#fff" stroke="#111" stroke-width="1.1"/><rect x="6.8" y="6.8" width="3.2" height="3.2" fill="#fff" stroke="#111" stroke-width="1.1"/><rect x="12.7" y="6.8" width="3.2" height="3.2" fill="#fff" stroke="#111" stroke-width="1.1"/><rect x="0.9" y="12.7" width="3.2" height="3.2" fill="#999" stroke="#888" stroke-width="1.1"/><rect x="6.8" y="12.7" width="3.2" height="3.2" fill="#fff" stroke="#111" stroke-width="1.1"/><rect x="12.7" y="12.7" width="3.2" height="3.2" fill="#fff" stroke="#111" stroke-width="1.1"/></svg><svg class="abs" style="left:1340px;top:331px;overflow:visible;" width="16" height="16" viewBox="0 0 16 16"><rect x="0.8" y="6.4" width="6.4" height="6.4" stroke="#444" stroke-width="1" fill="none" stroke-dasharray="1.4 1.2"/><rect x="8" y="6.4" width="5.8" height="5.8" transform="rotate(45 10.9 9.3)" fill="#fff" stroke="#111" stroke-width="1.3"/><path d="M4.4 4.4 Q6.6 0.4 10 2.6" stroke="#1a1aff" stroke-width="1.5" fill="none"/><path d="M11.4 4.4 l-3 -0.4 l2 -2.6z" fill="#1a1aff"/></svg><svg class="abs" style="left:1340px;top:363px;overflow:visible;" width="16" height="16" viewBox="0 0 16 16"><path d="M0.6 0.8 H15.4 V15.4 H9" stroke="#111" stroke-width="1.3" fill="none"/><rect x="0.8" y="8.4" width="6.8" height="6.8" stroke="#444" stroke-width="1" fill="none" stroke-dasharray="1.4 1.2"/><path d="M8.4 7.6 L12.8 3.2" stroke="#1a1aff" stroke-width="1.4"/><path d="M14.2 1.8 l-3.6 1 l2.6 2.6z" fill="#1a1aff"/></svg><svg class="abs" style="left:1340px;top:395px;overflow:visible;" width="16" height="16" viewBox="0 0 16 16"><path d="M0.8 0.8 H6 V7.6 H15.2 V13.8 H0.8z" fill="#c8c8c4" stroke="#888" stroke-width="0.8"/><path d="M6 7.6 H15.2 V13.8 H6" stroke="#111" stroke-width="1.2" fill="none"/><path d="M8 10.8 h4" stroke="#1a1aff" stroke-width="1.4"/><path d="M14 10.8 l-3 -2 v4z" fill="#1a1aff"/></svg><svg class="abs" style="left:1340px;top:427px;overflow:visible;" width="16" height="16" viewBox="0 0 16 16"><path d="M1 1.6 H7.4" stroke="#111" stroke-width="1.8"/><path d="M14.4 9.4 V15" stroke="#111" stroke-width="1.8"/><path d="M7.4 1.6 L14.4 9" stroke="#2a8af0" stroke-width="1.8"/></svg><svg class="abs" style="left:1340px;top:459px;overflow:visible;" width="16" height="16" viewBox="0 0 16 16"><path d="M0.6 1.6 H6" stroke="#111" stroke-width="1.8"/><path d="M14.4 9.6 V15" stroke="#111" stroke-width="1.8"/><path d="M6 1.6 Q14.4 1.6 14.4 9.6" stroke="#2a8af0" stroke-width="1.8" fill="none"/><path d="M5 8.4 h5 M7.5 6 v5" stroke="#111" stroke-width="1.1"/></svg><svg class="abs" style="left:1340px;top:491px;overflow:visible;" width="16" height="16" viewBox="0 0 16 16"><path d="M14 1 H7 Q1 1 1 7.6 Q1 14.6 7 14.6 H14 V10" stroke="#111" stroke-width="1.3" fill="none"/><circle cx="14" cy="5.4" r="1.5" fill="#2a8af0"/></svg><svg class="abs" style="left:1340px;top:523px;overflow:visible;" width="16" height="16" viewBox="0 0 16 16"><path d="M14 1 H7 Q1 1 1 7.6 Q1 14.6 7 14.6 H14 V12" stroke="#111" stroke-width="1.3" fill="none"/><circle cx="14" cy="4.6" r="1.4" fill="#2a8af0"/><circle cx="14" cy="9" r="1.4" fill="#2a8af0"/></svg><svg class="abs" style="left:1340px;top:555px;overflow:visible;" width="16" height="16" viewBox="0 0 16 16"><path d="M0.6 8 h4 M15.4 8 h-4" stroke="#2a8af0" stroke-width="1.6"/><path d="M7.4 8 l-3.6 -2.8 v5.6z M8.6 8 l3.6 -2.8 v5.6z" fill="#2a8af0"/></svg><svg class="abs" style="left:1340px;top:587px;overflow:visible;" width="16" height="16" viewBox="0 0 16 16"><path d="M0.4 1.6 H15.6" stroke="#111" stroke-width="1.8"/><path d="M8 3.4 V10" stroke="#2a8af0" stroke-width="1.6" stroke-dasharray="1.6 1.2"/><path d="M8 10.6 V15.6" stroke="#111" stroke-width="1.8"/></svg><svg class="abs" style="left:1340px;top:619px;overflow:visible;" width="16" height="16" viewBox="0 0 16 16"><path d="M1.4 6.4 L10.2 7.6 M2.4 15 L9.8 4.6 M8 9 L10.6 15.4" stroke="#222" stroke-width="1.3" stroke-linecap="round"/><circle cx="11.6" cy="3.4" r="1.9" fill="none" stroke="#a8842a" stroke-width="1.5"/><circle cx="13.4" cy="9" r="1.9" fill="none" stroke="#a8842a" stroke-width="1.5"/><path d="M2 0.6 L5.4 6" stroke="#2a8af0" stroke-width="1.7"/></svg><svg class="abs" style="left:1340px;top:651px;overflow:visible;" width="16" height="16" viewBox="0 0 16 16"><defs><pattern id="hp2" width="2.4" height="2.4" patternUnits="userSpaceOnUse" patternTransform="rotate(-45)"><rect width="2.4" height="1.1" fill="#555"/></pattern></defs><rect x="0.6" y="6" width="15" height="9.4" fill="#e6e6e6"/><rect x="0.6" y="6" width="15" height="9.4" fill="url(#hp2)" stroke="#888" stroke-width="0.6"/><path d="M2 6.4 q2 -4.4 6 -5 q4.4 -1.2 7.6 1 l-0.4 3.6 q-3 -0.6 -4.6 0.8 q-1.4 1.4 -3.6 0.6 q-2 -1.6 -5 -1z" fill="#e9b98a" stroke="#9a6a3a" stroke-width="0.7"/></svg><svg class="abs" style="left:1340px;top:683px;overflow:visible;" width="16" height="16" viewBox="0 0 16 16"><rect x="5.8" y="5.8" width="9.6" height="9.6" fill="#cfe4f6" stroke="#8aa8c8" stroke-width="0.9"/><rect x="0.6" y="0.6" width="9.8" height="9.8" fill="#f8e68a" stroke="#b8a23a" stroke-width="0.9"/></svg><svg class="abs" style="left:1345px;top:722.5px;" width="7" height="9" viewBox="0 0 7 9"><path d="M0.6 0.6 L3.4 3.4 L6.2 0.6 M0.6 4.6 L3.4 7.4 L6.2 4.6" stroke="#111" stroke-width="1.4" fill="none"/></svg>
<svg class="abs" style="left:339px;top:635px;" width="160" height="21" viewBox="0 0 160 21"><path d="M409.4 0 L416.6 16.2 Q417.6 18 419.4 18 H482.4 Q484.2 18 485 16.2 L491.4 0" transform="translate(-339,0)" fill="#f4f3f2" stroke="#777" stroke-width="1"/><path d="M339.2 -0.6 L346.6 17.2 Q347.6 19.4 349.6 19.4 H399.6 Q401.6 19.4 402.4 17.2 L409 -0.6" transform="translate(-339,0)" fill="#ffffff" stroke="#666" stroke-width="1"/></svg><div class="t" style="left:353.40px;top:634.00px;font-size:14.67px;line-height:20px;color:#4f4f4f;font-weight:bold;letter-spacing:0.356px;">Model</div><div class="t" style="left:423.30px;top:633.00px;font-size:14.67px;line-height:20px;color:#4f4f4f;font-weight:bold;letter-spacing:-0.207px;">Layout1</div><div class="abs" style="left:711px;top:656px;width:8px;height:3px;background:repeating-linear-gradient(90deg,#cfccc7 0 1px,transparent 1px 3px)"></div><div class="abs" style="left:334px;top:385px;width:4px;height:8px;background:repeating-linear-gradient(#cbc8c3 0 1px,#fdfdfd 1px 2px,transparent 2px 3px)"></div><div class="abs" style="left:338px;top:121px;width:1px;height:514px;background:#fbfbfa"></div>
<div class="t" style="left:103.20px;top:664.00px;font-size:14.67px;line-height:20px;color:#4f4f4f;font-weight:bold;letter-spacing:-0.075px;">Command window</div><svg class="abs" style="left:1299px;top:668px;" width="11" height="11" viewBox="0 0 11 11"><rect x="0.5" y="0.5" width="10" height="10" rx="2" fill="#f7f6f5" stroke="#6e6e6e" stroke-width="1"/><rect x="4" y="2.4" width="4.2" height="4" fill="none" stroke="#444" stroke-width="0.9"/><rect x="2.6" y="4.4" width="4.2" height="4" fill="#f7f6f5" stroke="#444" stroke-width="0.9"/></svg><svg class="abs" style="left:1316px;top:668px;" width="11" height="11" viewBox="0 0 11 11"><rect x="0.5" y="0.5" width="10" height="10" rx="2" fill="#f7f6f5" stroke="#6e6e6e" stroke-width="1"/><path d="M3 3 L8 8 M8 3 L3 8" stroke="#333" stroke-width="2"/></svg><div class="abs" style="left:101px;top:686px;width:1213px;height:35px;background:#fff;border:1px solid #b9b5ae;overflow:hidden"><div class="abs" style="left:6.4px;top:0px;width:2px;height:1.3px;background:#333"></div></div><div class="abs" style="left:101px;top:721.5px;width:1229px;height:12.5px;background:#fff"></div><div class="t" style="left:106.00px;top:688.00px;font-size:11.67px;line-height:20px;color:#222;font-family:'Liberation Mono',monospace;">&lt;Switching to: Model&gt;</div><div class="t" style="left:106.00px;top:701.00px;font-size:11.67px;line-height:20px;color:#222;font-family:'Liberation Mono',monospace;">: _PROPERTIES</div><div class="t" style="left:106.00px;top:719.00px;font-size:11.67px;line-height:20px;color:#222;font-family:'Liberation Mono',monospace;">:</div><div class="abs" style="left:1317.5px;top:686px;width:12.5px;height:35px;border-radius:6px;background:#f4f3f2;border:1px solid #bdb9b2"></div><div class="abs" style="left:1317.5px;top:699px;width:12.5px;height:9px;border-radius:4.5px;background:#f7f6f5;border:1px solid #a9a59e"></div><svg class="abs" style="left:1320.5px;top:690px;" width="7" height="5" viewBox="0 0 7 5"><path d="M1.2 4 L3.4 1.2 L5.6 4z" fill="#a5a29c"/></svg><svg class="abs" style="left:1320.5px;top:711px;" width="7" height="6" viewBox="0 0 7 6"><path d="M1 1 L3.4 4.2 L5.8 1z" fill="#a5a29c"/></svg><svg class="abs" style="left:1321px;top:701.5px;" width="6" height="4" viewBox="0 0 6 4"><path d="M0.6 0.8 h4.4 M0.6 3 h4.4" stroke="#a9a59e" stroke-width="0.9"/></svg><div class="abs" style="left:65px;top:734px;width:1301px;height:1px;background:#d6d3ce"></div>
<div class="btn" style="left:540.0px;width:46.5px"></div><div class="t" style="left:547.20px;top:742.00px;font-size:14.67px;line-height:20px;color:#4f4f4f;font-weight:bold;letter-spacing:-0.822px;">Snap</div><div class="btn" style="left:595.0px;width:41.0px"></div><div class="t" style="left:601.40px;top:742.00px;font-size:14.67px;line-height:20px;color:#4f4f4f;font-weight:bold;letter-spacing:-0.652px;">Grid</div><div class="btn" style="left:644.2px;width:54.8px"></div><div class="t" style="left:651.40px;top:742.00px;font-size:14.67px;line-height:20px;color:#4f4f4f;font-weight:bold;letter-spacing:0.268px;">Ortho</div><div class="btn" style="left:710.8px;width:49.2px"></div><div class="t" style="left:718.40px;top:742.00px;font-size:14.67px;line-height:20px;color:#4f4f4f;font-weight:bold;letter-spacing:-0.297px;">Polar</div><div class="btn" style="left:767.8px;width:56.2px"></div><div class="t" style="left:775.20px;top:742.00px;font-size:14.67px;line-height:20px;color:#4f4f4f;font-weight:bold;letter-spacing:-0.963px;">ESnap</div><div class="btn" style="left:832.0px;width:60.0px"></div><div class="t" style="left:839.20px;top:742.00px;font-size:14.67px;line-height:20px;color:#4f4f4f;font-weight:bold;letter-spacing:-0.424px;">ETrack</div><div class="t" style="left:901.80px;top:742.00px;font-size:14.67px;line-height:20px;color:#4f4f4f;font-weight:bold;letter-spacing:0.618px;">(182530.5636,-59970.4030,0.0000)</div>
</div>
</body>
</html>
